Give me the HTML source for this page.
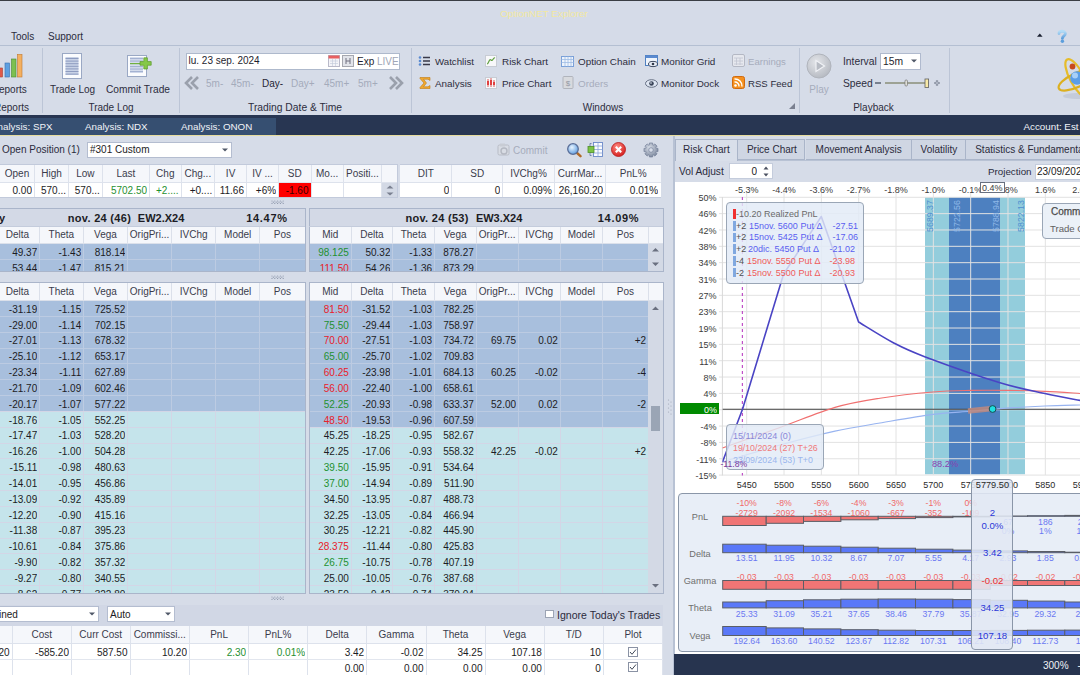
<!DOCTYPE html><html><head><meta charset="utf-8"><style>
html,body{margin:0;padding:0;}
body{width:1080px;height:675px;overflow:hidden;position:relative;background:#d6dce8;font-family:"Liberation Sans",sans-serif;}
body div, body svg{position:absolute;}
body div div{position:absolute;}
</style></head><body>
<div style="left:0.00px;top:0.00px;width:1080.00px;height:46.00px;background:#d5dbe8;"></div>
<div style="left:0.00px;top:0.00px;width:1080.00px;height:1.20px;background:#3a3d44;"></div>
<div style="left:474.00px;width:140.00px;text-align:center;overflow:hidden;top:6.50px;height:14px;line-height:14px;font-size:9.8px;color:#f2e8a0;font-weight:normal;white-space:pre;">OptionNET Explorer</div>
<div style="left:11.00px;top:29.50px;height:14px;line-height:14px;font-size:10px;color:#2b2b3c;font-weight:normal;white-space:pre;">Tools</div>
<div style="left:48.00px;top:29.50px;height:14px;line-height:14px;font-size:10px;color:#2b2b3c;font-weight:normal;white-space:pre;">Support</div>
<svg style="left:1035px;top:31px;width:10px;height:8px" viewBox="0 0 10 8"><path d="M2 5.8 L4.8 2.6 L7.6 5.8Z" fill="#1a2030"/></svg>
<svg style="left:1055px;top:28px;width:14px;height:16px" viewBox="0 0 14 16"><defs><linearGradient id="hq" x1="0" y1="0" x2="0" y2="1"><stop offset="0" stop-color="#b4dcf6"/><stop offset="1" stop-color="#5c9edc"/></linearGradient></defs><path d="M4 5.5 C4 2.6 10.4 2.4 10.4 5.6 C10.4 7.9 7.4 8 7.4 10.4" fill="none" stroke="url(#hq)" stroke-width="2.8" stroke-linecap="round"/><circle cx="7.4" cy="13.2" r="1.7" fill="#5c9edc"/></svg>
<div style="left:0.00px;top:45.00px;width:1080.00px;height:1.00px;background:#b4bfd2;"></div>
<div style="left:0.00px;top:46.00px;width:1080.00px;height:69.00px;background:#d6dce8;"></div>
<div style="left:42.00px;top:48.00px;width:1.00px;height:65.00px;background:#bcc5d6;"></div>
<div style="left:179.00px;top:48.00px;width:1.00px;height:65.00px;background:#bcc5d6;"></div>
<div style="left:411.00px;top:48.00px;width:1.00px;height:65.00px;background:#bcc5d6;"></div>
<div style="left:799.00px;top:48.00px;width:1.00px;height:65.00px;background:#bcc5d6;"></div>
<div style="left:949.00px;top:48.00px;width:1.00px;height:65.00px;background:#bcc5d6;"></div>
<svg style="left:0px;top:53px;width:24px;height:26px" viewBox="0 0 24 26"><rect x="-2" y="15" width="4.5" height="9" fill="#e05a4a" stroke="#a84030" stroke-width="0.6"/><rect x="5" y="10" width="4.5" height="14" fill="#5ea0e0" stroke="#3a70b0" stroke-width="0.6"/><rect x="11.5" y="6" width="4.5" height="18" fill="#7cc050" stroke="#4a8a30" stroke-width="0.6"/><rect x="17.5" y="1.5" width="4.5" height="22.5" fill="#f4b060" stroke="#c07830" stroke-width="0.6"/></svg>
<div style="left:-1.00px;top:82.50px;height:14px;line-height:14px;font-size:10px;color:#2d2d3d;font-weight:normal;white-space:pre;">eports</div>
<div style="left:-6.00px;top:100.80px;height:14px;line-height:14px;font-size:10px;color:#2d2d3d;font-weight:normal;white-space:pre;">Reports</div>
<svg style="left:61px;top:53px;width:22px;height:27px" viewBox="0 0 22 27"><rect x="1.5" y="0.5" width="19" height="25" fill="#fbfcfe" stroke="#9aa8c4"/><rect x="4.5" y="4" width="13" height="18" fill="#c8d2e6"/><rect x="4.5" y="5.0" width="13" height="1" fill="#8e9cc0"/><rect x="4.5" y="7.6" width="13" height="1" fill="#8e9cc0"/><rect x="4.5" y="10.2" width="13" height="1" fill="#8e9cc0"/><rect x="4.5" y="12.8" width="13" height="1" fill="#8e9cc0"/><rect x="4.5" y="15.4" width="13" height="1" fill="#8e9cc0"/><rect x="4.5" y="18.0" width="13" height="1" fill="#8e9cc0"/><rect x="4.5" y="20.6" width="13" height="1" fill="#8e9cc0"/></svg>
<div style="left:32.50px;width:80.00px;text-align:center;overflow:hidden;top:82.50px;height:14px;line-height:14px;font-size:10px;color:#2d2d3d;font-weight:normal;white-space:pre;">Trade Log</div>
<svg style="left:126px;top:53px;width:26px;height:25px" viewBox="0 0 26 25"><rect x="1.5" y="2.5" width="19" height="21" fill="#fbfcfe" stroke="#9aa8c4"/><rect x="4" y="4" width="13" height="16" fill="#d4dcec"/><rect x="4" y="5" width="13" height="1.1" fill="#a4b2d2"/><rect x="4" y="7.5" width="13" height="1.1" fill="#a4b2d2"/><rect x="4" y="13" width="13" height="1.1" fill="#a4b2d2"/><rect x="4" y="15.5" width="13" height="1.1" fill="#a4b2d2"/><rect x="4" y="18" width="13" height="1.1" fill="#a4b2d2"/><rect x="4" y="10" width="11" height="1.2" fill="#70b040"/><path d="M17.8 4.8 h3.6 v3.8 h3.8 v3.6 h-3.8 v3.8 h-3.6 v-3.8 h-3.8 v-3.6 h3.8z" fill="#86c84a" stroke="#5a9a2a" stroke-width="0.7"/></svg>
<div style="left:93.00px;width:90.00px;text-align:center;overflow:hidden;top:82.50px;height:14px;line-height:14px;font-size:10.2px;color:#2d2d3d;font-weight:normal;white-space:pre;">Commit Trade</div>
<div style="left:71.00px;width:80.00px;text-align:center;overflow:hidden;top:100.80px;height:14px;line-height:14px;font-size:10px;color:#2d2d3d;font-weight:normal;white-space:pre;">Trade Log</div>
<div style="left:186.00px;top:52.50px;width:214.00px;height:17.00px;background:#ffffff;border:1px solid #aeb9cc;box-sizing:border-box;"></div>
<div style="left:188.50px;top:54.00px;height:14px;line-height:14px;font-size:10px;color:#1e1e2e;font-weight:normal;white-space:pre;">lu. 23 sep. 2024</div>
<svg style="left:328px;top:55px;width:12px;height:12px" viewBox="0 0 12 12"><rect x="0.5" y="0.5" width="11" height="11" fill="#f4f4f8" stroke="#b9b9c9"/><rect x="0.5" y="0.5" width="11" height="3" fill="#e86060"/><path d="M2 6h8M2 8.5h8M4.5 4v7M7.5 4v7" stroke="#c0c8d8" stroke-width="0.6"/></svg>
<svg style="left:342px;top:55px;width:12px;height:12px" viewBox="0 0 12 12"><rect x="0.5" y="0.5" width="11" height="11" fill="#e2e4ea" stroke="#a6a8b0"/><path d="M4 3v6M8 3v6M4 6h4" stroke="#707080" stroke-width="1"/></svg>
<div style="left:357.00px;top:55.00px;height:14px;line-height:14px;font-size:10px;color:#1e1e2e;font-weight:normal;white-space:pre;">Exp</div>
<div style="left:377.00px;top:55.00px;height:14px;line-height:14px;font-size:10px;color:#a0a6b6;font-weight:normal;white-space:pre;">LIVE</div>
<svg style="left:184px;top:76px;width:16px;height:14px" viewBox="0 0 16 14"><path d="M8 1 L2 7 L8 13 M14 1 L8 7 L14 13" fill="none" stroke="#9aa0ac" stroke-width="2.6"/></svg>
<div style="left:206.00px;top:77.00px;height:14px;line-height:14px;font-size:10px;color:#a4abbb;font-weight:normal;white-space:pre;">5m-</div>
<div style="left:231.00px;top:77.00px;height:14px;line-height:14px;font-size:10px;color:#a4abbb;font-weight:normal;white-space:pre;">45m-</div>
<div style="left:262.00px;top:77.00px;height:14px;line-height:14px;font-size:10px;color:#252535;font-weight:normal;white-space:pre;">Day-</div>
<div style="left:291.00px;top:77.00px;height:14px;line-height:14px;font-size:10px;color:#a4abbb;font-weight:normal;white-space:pre;">Day+</div>
<div style="left:324.00px;top:77.00px;height:14px;line-height:14px;font-size:10px;color:#a4abbb;font-weight:normal;white-space:pre;">45m+</div>
<div style="left:358.00px;top:77.00px;height:14px;line-height:14px;font-size:10px;color:#a4abbb;font-weight:normal;white-space:pre;">5m+</div>
<svg style="left:388px;top:76px;width:16px;height:14px" viewBox="0 0 16 14"><path d="M2 1 L8 7 L2 13 M8 1 L14 7 L8 13" fill="none" stroke="#9aa0ac" stroke-width="2.6"/></svg>
<div style="left:235.00px;width:120.00px;text-align:center;overflow:hidden;top:100.80px;height:14px;line-height:14px;font-size:10.3px;color:#2d2d3d;font-weight:normal;white-space:pre;">Trading Date & Time</div>
<svg style="left:418px;top:55px;width:12px;height:12px" viewBox="0 0 12 12"><circle cx="2" cy="2.5" r="1.3" fill="#5a8ad0"/><circle cx="2" cy="6" r="1.3" fill="#5a8ad0"/><circle cx="2" cy="9.5" r="1.3" fill="#5a8ad0"/><path d="M5 2.5h7M5 6h7M5 9.5h7" stroke="#3a3a4a" stroke-width="1.3"/></svg>
<div style="left:435.00px;top:55.00px;height:14px;line-height:14px;font-size:9.7px;color:#2d2d3d;font-weight:normal;white-space:pre;">Watchlist</div>
<svg style="left:485px;top:55px;width:12px;height:12px" viewBox="0 0 12 12"><rect x="0.5" y="0.5" width="11" height="11" fill="#f8f8fa" stroke="#c8ccd4"/><path d="M2 9 C4 9 4 3 6 5 C8 7 8 2 10 3" fill="none" stroke="#60a040" stroke-width="1.2"/></svg>
<div style="left:502.00px;top:55.00px;height:14px;line-height:14px;font-size:9.9px;color:#2d2d3d;font-weight:normal;white-space:pre;">Risk Chart</div>
<svg style="left:561px;top:55px;width:13px;height:13px" viewBox="0 0 13 13"><rect x="0.5" y="1.5" width="12" height="10" fill="#eef4fc" stroke="#7aa0d8"/><path d="M0.5 4.5h12M0.5 7.5h12M4 1.5v10M7 1.5v10M10 1.5v10" stroke="#a0bce4" stroke-width="0.8"/></svg>
<div style="left:578.00px;top:55.00px;height:14px;line-height:14px;font-size:9.9px;color:#2d2d3d;font-weight:normal;white-space:pre;">Option Chain</div>
<svg style="left:645px;top:55px;width:13px;height:13px" viewBox="0 0 13 13"><rect x="0.5" y="0.5" width="12" height="10" fill="#eef4fc" stroke="#5080c0"/><rect x="0.5" y="0.5" width="12" height="2.5" fill="#5a8ad0"/><ellipse cx="8" cy="9" rx="4.5" ry="2.6" fill="#e8eef8" stroke="#404a60"/><circle cx="8" cy="9" r="1.3" fill="#303848"/></svg>
<div style="left:661.00px;top:55.00px;height:14px;line-height:14px;font-size:9.9px;color:#2d2d3d;font-weight:normal;white-space:pre;">Monitor Grid</div>
<svg style="left:732px;top:54px;width:13px;height:13px" viewBox="0 0 13 13"><rect x="0.5" y="0.5" width="12" height="12" rx="1.5" fill="#e6e8ee" stroke="#b4b8c4"/><path d="M2 4h9M2 7h9M2 10h9M4.5 4v7M8 4v7" stroke="#c0c4d0" stroke-width="0.8"/></svg>
<div style="left:748.00px;top:55.00px;height:14px;line-height:14px;font-size:9.6px;color:#a6acbc;font-weight:normal;white-space:pre;">Earnings</div>
<svg style="left:419px;top:77px;width:12px;height:12px" viewBox="0 0 12 12"><path d="M1 0.5 H11 V3.5 L9 2.2 H4.5 L7.5 6 L4.5 9.8 H9 L11 8.5 V11.5 H1 V10.5 L5 6 L1 1.5Z" fill="#f0a830" stroke="#c07a10" stroke-width="0.6"/></svg>
<div style="left:435.00px;top:77.00px;height:14px;line-height:14px;font-size:9.9px;color:#2d2d3d;font-weight:normal;white-space:pre;">Analysis</div>
<svg style="left:485px;top:77px;width:12px;height:12px" viewBox="0 0 12 12"><rect x="0.5" y="0.5" width="11" height="11" fill="#f8f8fa" stroke="#c8ccd4"/><path d="M3 2v8M6 1v9M9 3v7" stroke="#d03030" stroke-width="0.8"/><rect x="2" y="4" width="2" height="4" fill="#e04040"/><rect x="5" y="3" width="2" height="5" fill="#e04040"/><rect x="8" y="5" width="2" height="3" fill="#e04040"/></svg>
<div style="left:502.00px;top:77.00px;height:14px;line-height:14px;font-size:9.9px;color:#2d2d3d;font-weight:normal;white-space:pre;">Price Chart</div>
<svg style="left:562px;top:76px;width:12px;height:13px" viewBox="0 0 12 13"><rect x="1" y="0.5" width="10" height="12" rx="1" fill="#d8dade" stroke="#b0b4bc"/><text x="6" y="10" font-size="8" text-anchor="middle" fill="#9498a4" font-family="Liberation Sans">$</text></svg>
<div style="left:578.00px;top:77.00px;height:14px;line-height:14px;font-size:9.9px;color:#a6acbc;font-weight:normal;white-space:pre;">Orders</div>
<svg style="left:645px;top:77px;width:13px;height:13px" viewBox="0 0 13 13"><ellipse cx="6.5" cy="6.5" rx="6" ry="3.8" fill="#dfe6f2" stroke="#5a6478" stroke-width="0.9"/><circle cx="6.5" cy="6.5" r="2.3" fill="#3a4458"/><circle cx="6" cy="6" r="0.8" fill="#e8eef8"/></svg>
<div style="left:661.00px;top:77.00px;height:14px;line-height:14px;font-size:9.9px;color:#2d2d3d;font-weight:normal;white-space:pre;">Monitor Dock</div>
<svg style="left:732px;top:76px;width:13px;height:13px" viewBox="0 0 13 13"><rect x="0.5" y="0.5" width="12" height="12" rx="2" fill="#f4901e" stroke="#d06a10"/><circle cx="3.5" cy="9.5" r="1.3" fill="#fff"/><path d="M2.5 6 A4 4 0 0 1 7 10.5 M2.5 3 A7 7 0 0 1 10 10.5" fill="none" stroke="#fff" stroke-width="1.4"/></svg>
<div style="left:748.00px;top:77.00px;height:14px;line-height:14px;font-size:9.6px;color:#2d2d3d;font-weight:normal;white-space:pre;">RSS Feed</div>
<div style="left:573.00px;width:60.00px;text-align:center;overflow:hidden;top:100.80px;height:14px;line-height:14px;font-size:10px;color:#2d2d3d;font-weight:normal;white-space:pre;">Windows</div>
<svg style="left:789px;top:103px;width:6px;height:6px" viewBox="0 0 6 6"><path d="M6 0 V6 H0Z" fill="#7a8090"/></svg>
<svg style="left:806px;top:53px;width:26px;height:26px" viewBox="0 0 26 26"><defs><radialGradient id="pg" cx="0.4" cy="0.35" r="0.7"><stop offset="0" stop-color="#e4e6ea"/><stop offset="1" stop-color="#b4b8c0"/></radialGradient></defs><circle cx="13" cy="13" r="12" fill="url(#pg)" stroke="#b0b4bc"/><path d="M10 7.5 L18.5 13 L10 18.5Z" fill="#b8bcc4" stroke="#f0f2f6" stroke-width="1.2"/></svg>
<div style="left:799.00px;width:40.00px;text-align:center;overflow:hidden;top:82.50px;height:14px;line-height:14px;font-size:10px;color:#a6acbc;font-weight:normal;white-space:pre;">Play</div>
<div style="left:843.00px;top:55.00px;height:14px;line-height:14px;font-size:10.3px;color:#2d2d3d;font-weight:normal;white-space:pre;">Interval</div>
<div style="left:879.50px;top:53.00px;width:41.50px;height:16.50px;background:#ffffff;border:1px solid #b0bace;box-sizing:border-box;"></div>
<div style="left:883.00px;top:55.00px;height:14px;line-height:14px;font-size:10.3px;color:#1e1e2e;font-weight:normal;white-space:pre;">15m</div>
<svg style="left:911px;top:59px;width:6px;height:4px" viewBox="0 0 6 4"><path d="M0 0.5h6L3 3.5Z" fill="#505868"/></svg>
<div style="left:843.00px;top:77.00px;height:14px;line-height:14px;font-size:10.3px;color:#2d2d3d;font-weight:normal;white-space:pre;">Speed</div>
<svg style="left:874px;top:77px;width:68px;height:12px" viewBox="0 0 68 12"><path d="M1 6h6" stroke="#505868" stroke-width="1.4"/><path d="M11 6h44" stroke="#8a8f78" stroke-width="1.6"/><rect x="31" y="3" width="2.4" height="6" rx="1" fill="#e8e8e0" stroke="#707070" stroke-width="0.7"/><rect x="51" y="2" width="3.6" height="8.5" fill="#f8eaa8" stroke="#606060" stroke-width="0.8"/><path d="M60.5 6h5M63 3.5v5" stroke="#687080" stroke-width="2.2"/><path d="M61 6h4M63 4v4" stroke="#d6dce8" stroke-width="0.8"/></svg>
<div style="left:843.50px;width:60.00px;text-align:center;overflow:hidden;top:100.80px;height:14px;line-height:14px;font-size:10px;color:#2d2d3d;font-weight:normal;white-space:pre;">Playback</div>
<svg style="left:1054px;top:54px;width:26px;height:48px" viewBox="0 0 26 48"><ellipse cx="23" cy="42" rx="14" ry="3" fill="#b8c0d0" opacity="0.6"/><ellipse cx="23" cy="24" rx="7" ry="21" fill="none" stroke="#e6bc2a" stroke-width="2.2" transform="rotate(-28 23 24)"/><ellipse cx="23" cy="26" rx="20" ry="7" fill="none" stroke="#dcb020" stroke-width="2.2" transform="rotate(-25 23 26)"/><circle cx="23" cy="24" r="6.8" fill="#5b9ee6"/><circle cx="21" cy="21.5" r="3" fill="#a8d0f8"/><circle cx="18.5" cy="12.5" r="2.9" fill="#c84a1c"/></svg>
<div style="left:0.00px;top:115.00px;width:1080.00px;height:20.00px;background:#283652;"></div>
<div style="left:0.00px;top:117.60px;width:276.00px;height:17.40px;background:#364f71;"></div>
<div style="left:-9.00px;top:119.70px;height:14px;line-height:14px;font-size:9.8px;color:#f2f4f8;font-weight:normal;white-space:pre;">Analysis: SPX</div>
<div style="left:85.00px;top:119.70px;height:14px;line-height:14px;font-size:9.8px;color:#f2f4f8;font-weight:normal;white-space:pre;">Analysis: NDX</div>
<div style="left:181.00px;top:119.70px;height:14px;line-height:14px;font-size:9.8px;color:#f2f4f8;font-weight:normal;white-space:pre;">Analysis: ONON</div>
<div style="left:1023.50px;top:119.70px;height:14px;line-height:14px;font-size:9.8px;color:#f2f4f8;font-weight:normal;white-space:pre;">Account: Est</div>
<div style="left:0.00px;top:135.00px;width:1080.00px;height:2.00px;background:#e6dc9e;"></div>
<div style="left:0.00px;top:136.00px;width:663.00px;height:539.00px;background:#d6dce8;"></div>
<div style="left:663.00px;top:136.00px;width:11.00px;height:539.00px;background:#d6dce8;"></div>
<div style="left:673.30px;top:136.00px;width:1.20px;height:539.00px;background:#b8c2d4;"></div>
<svg style="left:667px;top:399px;width:6px;height:16px" viewBox="0 0 6 16"><circle cx="1.5" cy="1" r="0.6" fill="#a0a8b8"/><circle cx="4.0" cy="3" r="0.6" fill="#a0a8b8"/><circle cx="1.5" cy="5" r="0.6" fill="#a0a8b8"/><circle cx="4.0" cy="7" r="0.6" fill="#a0a8b8"/><circle cx="1.5" cy="9" r="0.6" fill="#a0a8b8"/><circle cx="4.0" cy="11" r="0.6" fill="#a0a8b8"/><circle cx="1.5" cy="13" r="0.6" fill="#a0a8b8"/><circle cx="4.0" cy="15" r="0.6" fill="#a0a8b8"/></svg>
<div style="left:2.00px;top:143.00px;height:14px;line-height:14px;font-size:10px;color:#2b2b3c;font-weight:normal;white-space:pre;">Open Position (1)</div>
<div style="left:87.00px;top:142.00px;width:145.00px;height:15.50px;background:#ffffff;border:1px solid #b4bdd0;box-sizing:border-box;"></div>
<div style="left:90.00px;top:143.00px;height:14px;line-height:14px;font-size:10px;color:#1c1c24;font-weight:normal;white-space:pre;">#301 Custom</div>
<svg style="left:222px;top:148px;width:6px;height:4px" viewBox="0 0 6 4"><path d="M0 0.5h6L3 3.5Z" fill="#505868"/></svg>
<svg style="left:497px;top:143px;width:14px;height:14px" viewBox="0 0 14 14"><rect x="1" y="2" width="11" height="10" rx="1.5" fill="#d8dce4" stroke="#b8bcc6"/><circle cx="7" cy="8" r="3" fill="none" stroke="#b4b8c2" stroke-width="1.4"/><rect x="3" y="0.5" width="5" height="3" fill="#c8ccd4"/></svg>
<div style="left:513.00px;top:144.00px;height:14px;line-height:14px;font-size:10px;color:#a6acbc;font-weight:normal;white-space:pre;">Commit</div>
<svg style="left:565px;top:141px;width:17px;height:17px" viewBox="0 0 17 17"><defs><radialGradient id="mg" cx="0.4" cy="0.35" r="0.7"><stop offset="0" stop-color="#e8f4ff"/><stop offset="1" stop-color="#5a9ae0"/></radialGradient></defs><path d="M11.5 11.5 L15.5 15.2" stroke="#b06a28" stroke-width="2.4" stroke-linecap="round"/><circle cx="8" cy="8" r="5.3" fill="url(#mg)" stroke="#5a6e98" stroke-width="1.3"/></svg>
<svg style="left:587px;top:141px;width:17px;height:17px" viewBox="0 0 17 17"><path d="M4.5 2.5 H3 V14.5 H4.5" fill="none" stroke="#6a7ea8" stroke-width="0.9"/><rect x="6.5" y="1.5" width="9" height="14" fill="#fafcff" stroke="#6a88c8" stroke-width="0.9"/><path d="M6.5 5h9M6.5 8.5h9M6.5 12h9M11 1.5v14" stroke="#8aa4d8" stroke-width="0.8"/><rect x="1" y="5.5" width="6" height="6" fill="#7cc444" stroke="#4e8e2a" stroke-width="0.8"/></svg>
<svg style="left:610px;top:141px;width:17px;height:17px" viewBox="0 0 17 17"><defs><radialGradient id="rg" cx="0.4" cy="0.3" r="0.75"><stop offset="0" stop-color="#ff8a80"/><stop offset="1" stop-color="#d21a1a"/></radialGradient></defs><circle cx="8.5" cy="8.5" r="7" fill="url(#rg)" stroke="#b81818" stroke-width="0.8"/><path d="M5.8 5.8 L11.2 11.2 M11.2 5.8 L5.8 11.2" stroke="#fff" stroke-width="2.1"/></svg>
<svg style="left:643px;top:141.5px;width:16px;height:16px" viewBox="0 0 16 16"><defs><radialGradient id="gg" cx="0.4" cy="0.35" r="0.7"><stop offset="0" stop-color="#d8dee8"/><stop offset="1" stop-color="#7a869c"/></radialGradient></defs><g fill="url(#gg)" stroke="#6a7690" stroke-width="0.6"><path d="M15.03 6.43 L15.03 9.57 L12.87 9.83 L12.73 10.17 L14.08 11.86 L11.86 14.08 L10.15 12.74 L9.81 12.88 L9.57 15.03 L6.43 15.03 L6.17 12.87 L5.83 12.73 L4.14 14.08 L1.92 11.86 L3.26 10.15 L3.12 9.81 L0.97 9.57 L0.97 6.43 L3.13 6.17 L3.27 5.83 L1.92 4.14 L4.14 1.92 L5.85 3.26 L6.19 3.12 L6.43 0.97 L9.57 0.97 L9.83 3.13 L10.17 3.27 L11.86 1.92 L14.08 4.14 L12.74 5.85 L12.88 6.19Z"/></g><circle cx="8" cy="8" r="2.3" fill="#d6dce8" stroke="#6a7690" stroke-width="0.6"/></svg>
<div style="left:-10.00px;top:164.50px;width:407.00px;height:18.00px;background:#f5f7fb;"></div>
<div style="left:-10.00px;top:182.50px;width:407.00px;height:14.70px;background:#ffffff;"></div>
<div style="left:-0.25px;width:34.50px;text-align:center;overflow:hidden;top:166.50px;height:14px;line-height:14px;font-size:10px;color:#3a3c4c;font-weight:normal;white-space:pre;">Open</div>
<div style="left:34.50px;width:34.00px;text-align:center;overflow:hidden;top:166.50px;height:14px;line-height:14px;font-size:10px;color:#3a3c4c;font-weight:normal;white-space:pre;">High</div>
<div style="left:68.50px;width:33.80px;text-align:center;overflow:hidden;top:166.50px;height:14px;line-height:14px;font-size:10px;color:#3a3c4c;font-weight:normal;white-space:pre;">Low</div>
<div style="left:102.30px;width:47.30px;text-align:center;overflow:hidden;top:166.50px;height:14px;line-height:14px;font-size:10px;color:#3a3c4c;font-weight:normal;white-space:pre;">Last</div>
<div style="left:149.60px;width:31.40px;text-align:center;overflow:hidden;top:166.50px;height:14px;line-height:14px;font-size:10px;color:#3a3c4c;font-weight:normal;white-space:pre;">Chg</div>
<div style="left:181.00px;width:33.70px;text-align:center;overflow:hidden;top:166.50px;height:14px;line-height:14px;font-size:10px;color:#3a3c4c;font-weight:normal;white-space:pre;">Chg...</div>
<div style="left:214.70px;width:31.80px;text-align:center;overflow:hidden;top:166.50px;height:14px;line-height:14px;font-size:10px;color:#3a3c4c;font-weight:normal;white-space:pre;">IV</div>
<div style="left:246.50px;width:32.10px;text-align:center;overflow:hidden;top:166.50px;height:14px;line-height:14px;font-size:10px;color:#3a3c4c;font-weight:normal;white-space:pre;">IV ...</div>
<div style="left:278.60px;width:32.40px;text-align:center;overflow:hidden;top:166.50px;height:14px;line-height:14px;font-size:10px;color:#3a3c4c;font-weight:normal;white-space:pre;">SD</div>
<div style="left:311.00px;width:32.30px;text-align:center;overflow:hidden;top:166.50px;height:14px;line-height:14px;font-size:10px;color:#3a3c4c;font-weight:normal;white-space:pre;">Mo...</div>
<div style="left:343.30px;width:38.40px;text-align:center;overflow:hidden;top:166.50px;height:14px;line-height:14px;font-size:10px;color:#3a3c4c;font-weight:normal;white-space:pre;">Positi...</div>
<div style="left:34.00px;top:164.50px;width:1.00px;height:32.70px;background:#dde2ec;"></div>
<div style="left:68.00px;top:164.50px;width:1.00px;height:32.70px;background:#dde2ec;"></div>
<div style="left:101.80px;top:164.50px;width:1.00px;height:32.70px;background:#dde2ec;"></div>
<div style="left:149.10px;top:164.50px;width:1.00px;height:32.70px;background:#dde2ec;"></div>
<div style="left:180.50px;top:164.50px;width:1.00px;height:32.70px;background:#dde2ec;"></div>
<div style="left:214.20px;top:164.50px;width:1.00px;height:32.70px;background:#dde2ec;"></div>
<div style="left:246.00px;top:164.50px;width:1.00px;height:32.70px;background:#dde2ec;"></div>
<div style="left:278.10px;top:164.50px;width:1.00px;height:32.70px;background:#dde2ec;"></div>
<div style="left:310.50px;top:164.50px;width:1.00px;height:32.70px;background:#dde2ec;"></div>
<div style="left:342.80px;top:164.50px;width:1.00px;height:32.70px;background:#dde2ec;"></div>
<div style="left:381.20px;top:164.50px;width:1.00px;height:32.70px;background:#dde2ec;"></div>
<div style="left:-10.00px;top:182.00px;width:407.00px;height:1.00px;background:#dde2ec;"></div>
<div style="left:278.60px;top:182.50px;width:32.40px;height:14.70px;background:#ff0000;"></div>
<div style="left:-18.00px;width:50.00px;text-align:right;overflow:hidden;top:184.35px;height:14px;line-height:14px;font-size:10px;color:#1c1c24;font-weight:normal;white-space:pre;">0.00</div>
<div style="left:16.00px;width:50.00px;text-align:right;overflow:hidden;top:184.35px;height:14px;line-height:14px;font-size:10px;color:#1c1c24;font-weight:normal;white-space:pre;">570...</div>
<div style="left:49.80px;width:50.00px;text-align:right;overflow:hidden;top:184.35px;height:14px;line-height:14px;font-size:10px;color:#1c1c24;font-weight:normal;white-space:pre;">570...</div>
<div style="left:97.10px;width:50.00px;text-align:right;overflow:hidden;top:184.35px;height:14px;line-height:14px;font-size:10px;color:#1f9030;font-weight:normal;white-space:pre;">5702.50</div>
<div style="left:128.50px;width:50.00px;text-align:right;overflow:hidden;top:184.35px;height:14px;line-height:14px;font-size:10px;color:#1f9030;font-weight:normal;white-space:pre;">+2....</div>
<div style="left:162.20px;width:50.00px;text-align:right;overflow:hidden;top:184.35px;height:14px;line-height:14px;font-size:10px;color:#1c1c24;font-weight:normal;white-space:pre;">+0....</div>
<div style="left:194.00px;width:50.00px;text-align:right;overflow:hidden;top:184.35px;height:14px;line-height:14px;font-size:10px;color:#1c1c24;font-weight:normal;white-space:pre;">11.66</div>
<div style="left:226.10px;width:50.00px;text-align:right;overflow:hidden;top:184.35px;height:14px;line-height:14px;font-size:10px;color:#1c1c24;font-weight:normal;white-space:pre;">+6%</div>
<div style="left:258.50px;width:50.00px;text-align:right;overflow:hidden;top:184.35px;height:14px;line-height:14px;font-size:10px;color:#3a0000;font-weight:normal;white-space:pre;">-1.60</div>
<div style="left:381.70px;top:182.50px;width:15.30px;height:14.70px;background:#d3d9e5;"></div>
<svg style="left:383.5px;top:182.5px;width:12px;height:15px" viewBox="0 0 12 15"><path d="M2.5 5.5 L6 2.5 L9.5 5.5Z M2.5 9.5 L6 12.5 L9.5 9.5Z" fill="#7a8090"/></svg>
<div style="left:-10.00px;top:164.00px;width:407.50px;height:33.50px;background:transparent;border:1px solid #c2cadb;box-sizing:border-box;"></div>
<div style="left:400.00px;top:164.00px;width:261.00px;height:33.50px;background:transparent;border:1px solid #c2cadb;box-sizing:border-box;"></div>
<div style="left:400.00px;top:164.50px;width:260.70px;height:18.00px;background:#f5f7fb;"></div>
<div style="left:400.00px;top:182.50px;width:260.70px;height:14.70px;background:#ffffff;"></div>
<div style="left:400.00px;width:51.70px;text-align:center;overflow:hidden;top:166.50px;height:14px;line-height:14px;font-size:10px;color:#3a3c4c;font-weight:normal;white-space:pre;">DIT</div>
<div style="left:451.70px;width:51.00px;text-align:center;overflow:hidden;top:166.50px;height:14px;line-height:14px;font-size:10px;color:#3a3c4c;font-weight:normal;white-space:pre;">SD</div>
<div style="left:502.70px;width:51.60px;text-align:center;overflow:hidden;top:166.50px;height:14px;line-height:14px;font-size:10px;color:#3a3c4c;font-weight:normal;white-space:pre;">IVChg%</div>
<div style="left:554.30px;width:51.40px;text-align:center;overflow:hidden;top:166.50px;height:14px;line-height:14px;font-size:10px;color:#3a3c4c;font-weight:normal;white-space:pre;">CurrMar...</div>
<div style="left:605.70px;width:55.00px;text-align:center;overflow:hidden;top:166.50px;height:14px;line-height:14px;font-size:10px;color:#3a3c4c;font-weight:normal;white-space:pre;">PnL%</div>
<div style="left:451.20px;top:164.50px;width:1.00px;height:32.70px;background:#dde2ec;"></div>
<div style="left:502.20px;top:164.50px;width:1.00px;height:32.70px;background:#dde2ec;"></div>
<div style="left:553.80px;top:164.50px;width:1.00px;height:32.70px;background:#dde2ec;"></div>
<div style="left:605.20px;top:164.50px;width:1.00px;height:32.70px;background:#dde2ec;"></div>
<div style="left:400.00px;top:182.00px;width:260.70px;height:1.00px;background:#dde2ec;"></div>
<div style="left:389.20px;width:60.00px;text-align:right;overflow:hidden;top:184.35px;height:14px;line-height:14px;font-size:10px;color:#1c1c24;font-weight:normal;white-space:pre;">0</div>
<div style="left:440.20px;width:60.00px;text-align:right;overflow:hidden;top:184.35px;height:14px;line-height:14px;font-size:10px;color:#1c1c24;font-weight:normal;white-space:pre;">0</div>
<div style="left:491.80px;width:60.00px;text-align:right;overflow:hidden;top:184.35px;height:14px;line-height:14px;font-size:10px;color:#1c1c24;font-weight:normal;white-space:pre;">0.09%</div>
<div style="left:543.20px;width:60.00px;text-align:right;overflow:hidden;top:184.35px;height:14px;line-height:14px;font-size:10px;color:#1c1c24;font-weight:normal;white-space:pre;">26,160.20</div>
<div style="left:598.20px;width:60.00px;text-align:right;overflow:hidden;top:184.35px;height:14px;line-height:14px;font-size:10px;color:#1c1c24;font-weight:normal;white-space:pre;">0.01%</div>
<svg style="left:271.4px;top:200.2px;width:14px;height:5px" viewBox="0 0 14 5"><circle cx="1.0" cy="1.0" r="0.6" fill="#8e98ac"/><circle cx="3.8" cy="1.0" r="0.6" fill="#8e98ac"/><circle cx="6.6" cy="1.0" r="0.6" fill="#8e98ac"/><circle cx="9.4" cy="1.0" r="0.6" fill="#8e98ac"/><circle cx="12.2" cy="1.0" r="0.6" fill="#8e98ac"/><circle cx="2.4" cy="2.2" r="0.6" fill="#8e98ac"/><circle cx="5.2" cy="2.2" r="0.6" fill="#8e98ac"/><circle cx="8.0" cy="2.2" r="0.6" fill="#8e98ac"/><circle cx="10.8" cy="2.2" r="0.6" fill="#8e98ac"/><circle cx="1.0" cy="3.4" r="0.6" fill="#8e98ac"/><circle cx="3.8" cy="3.4" r="0.6" fill="#8e98ac"/><circle cx="6.6" cy="3.4" r="0.6" fill="#8e98ac"/><circle cx="9.4" cy="3.4" r="0.6" fill="#8e98ac"/><circle cx="12.2" cy="3.4" r="0.6" fill="#8e98ac"/></svg>
<svg style="left:271.4px;top:275.2px;width:14px;height:5px" viewBox="0 0 14 5"><circle cx="1.0" cy="1.0" r="0.6" fill="#8e98ac"/><circle cx="3.8" cy="1.0" r="0.6" fill="#8e98ac"/><circle cx="6.6" cy="1.0" r="0.6" fill="#8e98ac"/><circle cx="9.4" cy="1.0" r="0.6" fill="#8e98ac"/><circle cx="12.2" cy="1.0" r="0.6" fill="#8e98ac"/><circle cx="2.4" cy="2.2" r="0.6" fill="#8e98ac"/><circle cx="5.2" cy="2.2" r="0.6" fill="#8e98ac"/><circle cx="8.0" cy="2.2" r="0.6" fill="#8e98ac"/><circle cx="10.8" cy="2.2" r="0.6" fill="#8e98ac"/><circle cx="1.0" cy="3.4" r="0.6" fill="#8e98ac"/><circle cx="3.8" cy="3.4" r="0.6" fill="#8e98ac"/><circle cx="6.6" cy="3.4" r="0.6" fill="#8e98ac"/><circle cx="9.4" cy="3.4" r="0.6" fill="#8e98ac"/><circle cx="12.2" cy="3.4" r="0.6" fill="#8e98ac"/></svg>
<svg style="left:271.4px;top:596.3px;width:14px;height:5px" viewBox="0 0 14 5"><circle cx="1.0" cy="1.0" r="0.6" fill="#8e98ac"/><circle cx="3.8" cy="1.0" r="0.6" fill="#8e98ac"/><circle cx="6.6" cy="1.0" r="0.6" fill="#8e98ac"/><circle cx="9.4" cy="1.0" r="0.6" fill="#8e98ac"/><circle cx="12.2" cy="1.0" r="0.6" fill="#8e98ac"/><circle cx="2.4" cy="2.2" r="0.6" fill="#8e98ac"/><circle cx="5.2" cy="2.2" r="0.6" fill="#8e98ac"/><circle cx="8.0" cy="2.2" r="0.6" fill="#8e98ac"/><circle cx="10.8" cy="2.2" r="0.6" fill="#8e98ac"/><circle cx="1.0" cy="3.4" r="0.6" fill="#8e98ac"/><circle cx="3.8" cy="3.4" r="0.6" fill="#8e98ac"/><circle cx="6.6" cy="3.4" r="0.6" fill="#8e98ac"/><circle cx="9.4" cy="3.4" r="0.6" fill="#8e98ac"/><circle cx="12.2" cy="3.4" r="0.6" fill="#8e98ac"/></svg>
<div style="left:-2.00px;top:207.50px;width:308.00px;height:64.50px;background:#c8d0de;border:1px solid #aab5ca;box-sizing:border-box;"></div>
<div style="left:-1.00px;top:208.50px;width:306.00px;height:17.50px;background:#d3d9e6;"></div>
<div style="left:-1.00px;top:210.70px;height:14px;line-height:14px;font-size:11px;color:#1c1c24;font-weight:bold;white-space:pre;">y</div>
<div style="left:67.80px;top:210.70px;height:14px;line-height:14px;font-size:11px;color:#1c1c24;font-weight:bold;white-space:pre;letter-spacing:0.3px">nov. 24 (46)</div>
<div style="left:137.80px;top:210.70px;height:14px;line-height:14px;font-size:11px;color:#1c1c24;font-weight:bold;white-space:pre;">EW2.X24</div>
<div style="left:246.20px;top:210.70px;height:14px;line-height:14px;font-size:11px;color:#1c1c24;font-weight:bold;white-space:pre;letter-spacing:0.7px">14.47%</div>
<div style="left:-4.70px;top:226.00px;width:309.70px;height:17.50px;background:#f5f7fb;"></div>
<div style="left:-3.70px;width:42.10px;text-align:center;overflow:hidden;top:227.75px;height:14px;line-height:14px;font-size:10px;color:#3a3c4c;font-weight:normal;white-space:pre;">Delta</div>
<div style="left:40.40px;width:42.00px;text-align:center;overflow:hidden;top:227.75px;height:14px;line-height:14px;font-size:10px;color:#3a3c4c;font-weight:normal;white-space:pre;">Theta</div>
<div style="left:84.40px;width:42.10px;text-align:center;overflow:hidden;top:227.75px;height:14px;line-height:14px;font-size:10px;color:#3a3c4c;font-weight:normal;white-space:pre;">Vega</div>
<div style="left:128.50px;width:42.10px;text-align:center;overflow:hidden;top:227.75px;height:14px;line-height:14px;font-size:10px;color:#3a3c4c;font-weight:normal;white-space:pre;">OrigPri...</div>
<div style="left:172.60px;width:42.10px;text-align:center;overflow:hidden;top:227.75px;height:14px;line-height:14px;font-size:10px;color:#3a3c4c;font-weight:normal;white-space:pre;">IVChg</div>
<div style="left:216.70px;width:42.10px;text-align:center;overflow:hidden;top:227.75px;height:14px;line-height:14px;font-size:10px;color:#3a3c4c;font-weight:normal;white-space:pre;">Model</div>
<div style="left:260.80px;width:43.20px;text-align:center;overflow:hidden;top:227.75px;height:14px;line-height:14px;font-size:10px;color:#3a3c4c;font-weight:normal;white-space:pre;">Pos</div>
<div style="left:-4.70px;top:242.50px;width:309.70px;height:1.00px;background:#dbe0ea;"></div>
<div style="left:38.90px;top:226.00px;width:1.00px;height:17.50px;background:#dbe0ea;"></div>
<div style="left:82.90px;top:226.00px;width:1.00px;height:17.50px;background:#dbe0ea;"></div>
<div style="left:127.00px;top:226.00px;width:1.00px;height:17.50px;background:#dbe0ea;"></div>
<div style="left:171.10px;top:226.00px;width:1.00px;height:17.50px;background:#dbe0ea;"></div>
<div style="left:215.20px;top:226.00px;width:1.00px;height:17.50px;background:#dbe0ea;"></div>
<div style="left:259.30px;top:226.00px;width:1.00px;height:17.50px;background:#dbe0ea;"></div>
<div style="left:-4.70px;top:243.50px;width:309.70px;height:15.83px;background:#a8bfdd;"></div>
<div style="left:-4.70px;top:259.33px;width:309.70px;height:12.67px;background:#a8bfdd;"></div>
<div style="left:-4.70px;top:258.93px;width:309.70px;height:1.00px;background:#bccbe2;"></div>
<div style="left:38.90px;top:243.50px;width:1.00px;height:15.83px;background:#bccbe2;"></div>
<div style="left:82.90px;top:243.50px;width:1.00px;height:15.83px;background:#bccbe2;"></div>
<div style="left:127.00px;top:243.50px;width:1.00px;height:15.83px;background:#bccbe2;"></div>
<div style="left:171.10px;top:243.50px;width:1.00px;height:15.83px;background:#bccbe2;"></div>
<div style="left:215.20px;top:243.50px;width:1.00px;height:15.83px;background:#bccbe2;"></div>
<div style="left:259.30px;top:243.50px;width:1.00px;height:15.83px;background:#bccbe2;"></div>
<div style="left:38.90px;top:259.33px;width:1.00px;height:12.67px;background:#bccbe2;"></div>
<div style="left:82.90px;top:259.33px;width:1.00px;height:12.67px;background:#bccbe2;"></div>
<div style="left:127.00px;top:259.33px;width:1.00px;height:12.67px;background:#bccbe2;"></div>
<div style="left:171.10px;top:259.33px;width:1.00px;height:12.67px;background:#bccbe2;"></div>
<div style="left:215.20px;top:259.33px;width:1.00px;height:12.67px;background:#bccbe2;"></div>
<div style="left:259.30px;top:259.33px;width:1.00px;height:12.67px;background:#bccbe2;"></div>
<div style="left:-4.70px;top:243.50px;width:309.70px;height:28.50px;overflow:hidden">
<div style="left:-2.20px;width:44.10px;text-align:right;overflow:hidden;top:2.21px;height:14px;line-height:14px;font-size:10px;color:#1c1c24;font-weight:normal;white-space:pre;">49.37</div>
<div style="left:41.90px;width:44.00px;text-align:right;overflow:hidden;top:2.21px;height:14px;line-height:14px;font-size:10px;color:#1c1c24;font-weight:normal;white-space:pre;">-1.43</div>
<div style="left:85.90px;width:44.10px;text-align:right;overflow:hidden;top:2.21px;height:14px;line-height:14px;font-size:10px;color:#1c1c24;font-weight:normal;white-space:pre;">818.14</div>
<div style="left:-2.20px;width:44.10px;text-align:right;overflow:hidden;top:18.05px;height:14px;line-height:14px;font-size:10px;color:#1c1c24;font-weight:normal;white-space:pre;">53.44</div>
<div style="left:41.90px;width:44.00px;text-align:right;overflow:hidden;top:18.05px;height:14px;line-height:14px;font-size:10px;color:#1c1c24;font-weight:normal;white-space:pre;">-1.47</div>
<div style="left:85.90px;width:44.10px;text-align:right;overflow:hidden;top:18.05px;height:14px;line-height:14px;font-size:10px;color:#1c1c24;font-weight:normal;white-space:pre;">815.21</div>
</div>
<div style="left:308.50px;top:207.50px;width:355.00px;height:64.50px;background:#c8d0de;border:1px solid #aab5ca;box-sizing:border-box;"></div>
<div style="left:309.50px;top:208.50px;width:353.00px;height:17.50px;background:#d3d9e6;"></div>
<div style="left:405.40px;top:210.70px;height:14px;line-height:14px;font-size:11px;color:#1c1c24;font-weight:bold;white-space:pre;letter-spacing:0.3px">nov. 24 (53)</div>
<div style="left:475.90px;top:210.70px;height:14px;line-height:14px;font-size:11px;color:#1c1c24;font-weight:bold;white-space:pre;">EW3.X24</div>
<div style="left:597.80px;top:210.70px;height:14px;line-height:14px;font-size:11px;color:#1c1c24;font-weight:bold;white-space:pre;letter-spacing:0.7px">14.09%</div>
<div style="left:309.50px;top:226.00px;width:353.00px;height:17.50px;background:#f5f7fb;"></div>
<div style="left:310.50px;width:39.50px;text-align:center;overflow:hidden;top:227.75px;height:14px;line-height:14px;font-size:10px;color:#3a3c4c;font-weight:normal;white-space:pre;">Mid</div>
<div style="left:352.00px;width:39.70px;text-align:center;overflow:hidden;top:227.75px;height:14px;line-height:14px;font-size:10px;color:#3a3c4c;font-weight:normal;white-space:pre;">Delta</div>
<div style="left:393.70px;width:39.60px;text-align:center;overflow:hidden;top:227.75px;height:14px;line-height:14px;font-size:10px;color:#3a3c4c;font-weight:normal;white-space:pre;">Theta</div>
<div style="left:435.30px;width:39.70px;text-align:center;overflow:hidden;top:227.75px;height:14px;line-height:14px;font-size:10px;color:#3a3c4c;font-weight:normal;white-space:pre;">Vega</div>
<div style="left:477.00px;width:40.30px;text-align:center;overflow:hidden;top:227.75px;height:14px;line-height:14px;font-size:10px;color:#3a3c4c;font-weight:normal;white-space:pre;">OrigPr...</div>
<div style="left:519.30px;width:39.70px;text-align:center;overflow:hidden;top:227.75px;height:14px;line-height:14px;font-size:10px;color:#3a3c4c;font-weight:normal;white-space:pre;">IVChg</div>
<div style="left:561.00px;width:40.70px;text-align:center;overflow:hidden;top:227.75px;height:14px;line-height:14px;font-size:10px;color:#3a3c4c;font-weight:normal;white-space:pre;">Model</div>
<div style="left:603.70px;width:43.60px;text-align:center;overflow:hidden;top:227.75px;height:14px;line-height:14px;font-size:10px;color:#3a3c4c;font-weight:normal;white-space:pre;">Pos</div>
<div style="left:309.50px;top:242.50px;width:353.00px;height:1.00px;background:#dbe0ea;"></div>
<div style="left:350.50px;top:226.00px;width:1.00px;height:17.50px;background:#dbe0ea;"></div>
<div style="left:392.20px;top:226.00px;width:1.00px;height:17.50px;background:#dbe0ea;"></div>
<div style="left:433.80px;top:226.00px;width:1.00px;height:17.50px;background:#dbe0ea;"></div>
<div style="left:475.50px;top:226.00px;width:1.00px;height:17.50px;background:#dbe0ea;"></div>
<div style="left:517.80px;top:226.00px;width:1.00px;height:17.50px;background:#dbe0ea;"></div>
<div style="left:559.50px;top:226.00px;width:1.00px;height:17.50px;background:#dbe0ea;"></div>
<div style="left:602.20px;top:226.00px;width:1.00px;height:17.50px;background:#dbe0ea;"></div>
<div style="left:647.80px;top:226.00px;width:1.00px;height:17.50px;background:#dbe0ea;"></div>
<div style="left:309.50px;top:243.50px;width:353.00px;height:15.83px;background:#a8bfdd;"></div>
<div style="left:309.50px;top:259.33px;width:353.00px;height:12.67px;background:#a8bfdd;"></div>
<div style="left:309.50px;top:258.93px;width:353.00px;height:1.00px;background:#bccbe2;"></div>
<div style="left:350.50px;top:243.50px;width:1.00px;height:15.83px;background:#bccbe2;"></div>
<div style="left:392.20px;top:243.50px;width:1.00px;height:15.83px;background:#bccbe2;"></div>
<div style="left:433.80px;top:243.50px;width:1.00px;height:15.83px;background:#bccbe2;"></div>
<div style="left:475.50px;top:243.50px;width:1.00px;height:15.83px;background:#bccbe2;"></div>
<div style="left:517.80px;top:243.50px;width:1.00px;height:15.83px;background:#bccbe2;"></div>
<div style="left:559.50px;top:243.50px;width:1.00px;height:15.83px;background:#bccbe2;"></div>
<div style="left:602.20px;top:243.50px;width:1.00px;height:15.83px;background:#bccbe2;"></div>
<div style="left:647.80px;top:243.50px;width:1.00px;height:15.83px;background:#bccbe2;"></div>
<div style="left:350.50px;top:259.33px;width:1.00px;height:12.67px;background:#bccbe2;"></div>
<div style="left:392.20px;top:259.33px;width:1.00px;height:12.67px;background:#bccbe2;"></div>
<div style="left:433.80px;top:259.33px;width:1.00px;height:12.67px;background:#bccbe2;"></div>
<div style="left:475.50px;top:259.33px;width:1.00px;height:12.67px;background:#bccbe2;"></div>
<div style="left:517.80px;top:259.33px;width:1.00px;height:12.67px;background:#bccbe2;"></div>
<div style="left:559.50px;top:259.33px;width:1.00px;height:12.67px;background:#bccbe2;"></div>
<div style="left:602.20px;top:259.33px;width:1.00px;height:12.67px;background:#bccbe2;"></div>
<div style="left:647.80px;top:259.33px;width:1.00px;height:12.67px;background:#bccbe2;"></div>
<div style="left:309.50px;top:243.50px;width:353.00px;height:28.50px;overflow:hidden">
<div style="left:-2.20px;width:41.50px;text-align:right;overflow:hidden;top:2.21px;height:14px;line-height:14px;font-size:10px;color:#1f9030;font-weight:normal;white-space:pre;">98.125</div>
<div style="left:39.30px;width:41.70px;text-align:right;overflow:hidden;top:2.21px;height:14px;line-height:14px;font-size:10px;color:#1c1c24;font-weight:normal;white-space:pre;">50.32</div>
<div style="left:81.00px;width:41.60px;text-align:right;overflow:hidden;top:2.21px;height:14px;line-height:14px;font-size:10px;color:#1c1c24;font-weight:normal;white-space:pre;">-1.33</div>
<div style="left:122.60px;width:41.70px;text-align:right;overflow:hidden;top:2.21px;height:14px;line-height:14px;font-size:10px;color:#1c1c24;font-weight:normal;white-space:pre;">878.27</div>
<div style="left:-2.20px;width:41.50px;text-align:right;overflow:hidden;top:18.05px;height:14px;line-height:14px;font-size:10px;color:#e8202a;font-weight:normal;white-space:pre;">111.50</div>
<div style="left:39.30px;width:41.70px;text-align:right;overflow:hidden;top:18.05px;height:14px;line-height:14px;font-size:10px;color:#1c1c24;font-weight:normal;white-space:pre;">54.26</div>
<div style="left:81.00px;width:41.60px;text-align:right;overflow:hidden;top:18.05px;height:14px;line-height:14px;font-size:10px;color:#1c1c24;font-weight:normal;white-space:pre;">-1.36</div>
<div style="left:122.60px;width:41.70px;text-align:right;overflow:hidden;top:18.05px;height:14px;line-height:14px;font-size:10px;color:#1c1c24;font-weight:normal;white-space:pre;">873.29</div>
</div>
<div style="left:648.30px;top:243.50px;width:14.70px;height:28.00px;background:#d3d9e5;"></div>
<svg style="left:650px;top:244px;width:11px;height:27px" viewBox="0 0 11 27"><path d="M2 7.5 L5.5 4 L9 7.5Z M2 18.5 L5.5 22 L9 18.5Z" fill="#6a7080"/></svg>
<div style="left:-2.00px;top:207.50px;width:308.00px;height:64.50px;background:transparent;border:1px solid #aab5ca;box-sizing:border-box;"></div>
<div style="left:308.50px;top:207.50px;width:355.00px;height:64.50px;background:transparent;border:1px solid #aab5ca;box-sizing:border-box;"></div>
<div style="left:0.00px;top:225.50px;width:305.00px;height:1.00px;background:#c4ccdc;"></div>
<div style="left:309.00px;top:225.50px;width:354.00px;height:1.00px;background:#c4ccdc;"></div>
<div style="left:-2.00px;top:282.00px;width:308.00px;height:312.00px;background:#c8d0de;border:1px solid #aab5ca;box-sizing:border-box;"></div>
<div style="left:-4.70px;top:283.20px;width:309.70px;height:17.30px;background:#f5f7fb;"></div>
<div style="left:-3.70px;width:42.10px;text-align:center;overflow:hidden;top:284.85px;height:14px;line-height:14px;font-size:10px;color:#3a3c4c;font-weight:normal;white-space:pre;">Delta</div>
<div style="left:40.40px;width:42.00px;text-align:center;overflow:hidden;top:284.85px;height:14px;line-height:14px;font-size:10px;color:#3a3c4c;font-weight:normal;white-space:pre;">Theta</div>
<div style="left:84.40px;width:42.10px;text-align:center;overflow:hidden;top:284.85px;height:14px;line-height:14px;font-size:10px;color:#3a3c4c;font-weight:normal;white-space:pre;">Vega</div>
<div style="left:128.50px;width:42.10px;text-align:center;overflow:hidden;top:284.85px;height:14px;line-height:14px;font-size:10px;color:#3a3c4c;font-weight:normal;white-space:pre;">OrigPri...</div>
<div style="left:172.60px;width:42.10px;text-align:center;overflow:hidden;top:284.85px;height:14px;line-height:14px;font-size:10px;color:#3a3c4c;font-weight:normal;white-space:pre;">IVChg</div>
<div style="left:216.70px;width:42.10px;text-align:center;overflow:hidden;top:284.85px;height:14px;line-height:14px;font-size:10px;color:#3a3c4c;font-weight:normal;white-space:pre;">Model</div>
<div style="left:260.80px;width:43.20px;text-align:center;overflow:hidden;top:284.85px;height:14px;line-height:14px;font-size:10px;color:#3a3c4c;font-weight:normal;white-space:pre;">Pos</div>
<div style="left:-4.70px;top:299.50px;width:309.70px;height:1.00px;background:#dbe0ea;"></div>
<div style="left:38.90px;top:283.20px;width:1.00px;height:17.30px;background:#dbe0ea;"></div>
<div style="left:82.90px;top:283.20px;width:1.00px;height:17.30px;background:#dbe0ea;"></div>
<div style="left:127.00px;top:283.20px;width:1.00px;height:17.30px;background:#dbe0ea;"></div>
<div style="left:171.10px;top:283.20px;width:1.00px;height:17.30px;background:#dbe0ea;"></div>
<div style="left:215.20px;top:283.20px;width:1.00px;height:17.30px;background:#dbe0ea;"></div>
<div style="left:259.30px;top:283.20px;width:1.00px;height:17.30px;background:#dbe0ea;"></div>
<div style="left:-4.70px;top:300.50px;width:309.70px;height:15.83px;background:#a8bfdd;"></div>
<div style="left:-4.70px;top:316.33px;width:309.70px;height:15.83px;background:#a8bfdd;"></div>
<div style="left:-4.70px;top:332.16px;width:309.70px;height:15.83px;background:#a8bfdd;"></div>
<div style="left:-4.70px;top:347.99px;width:309.70px;height:15.83px;background:#a8bfdd;"></div>
<div style="left:-4.70px;top:363.82px;width:309.70px;height:15.83px;background:#a8bfdd;"></div>
<div style="left:-4.70px;top:379.65px;width:309.70px;height:15.83px;background:#a8bfdd;"></div>
<div style="left:-4.70px;top:395.48px;width:309.70px;height:15.83px;background:#a8bfdd;"></div>
<div style="left:-4.70px;top:411.31px;width:309.70px;height:15.83px;background:#c5e4eb;"></div>
<div style="left:-4.70px;top:427.14px;width:309.70px;height:15.83px;background:#c5e4eb;"></div>
<div style="left:-4.70px;top:442.97px;width:309.70px;height:15.83px;background:#c5e4eb;"></div>
<div style="left:-4.70px;top:458.80px;width:309.70px;height:15.83px;background:#c5e4eb;"></div>
<div style="left:-4.70px;top:474.63px;width:309.70px;height:15.83px;background:#c5e4eb;"></div>
<div style="left:-4.70px;top:490.46px;width:309.70px;height:15.83px;background:#c5e4eb;"></div>
<div style="left:-4.70px;top:506.29px;width:309.70px;height:15.83px;background:#c5e4eb;"></div>
<div style="left:-4.70px;top:522.12px;width:309.70px;height:15.83px;background:#c5e4eb;"></div>
<div style="left:-4.70px;top:537.95px;width:309.70px;height:15.83px;background:#c5e4eb;"></div>
<div style="left:-4.70px;top:553.78px;width:309.70px;height:15.83px;background:#c5e4eb;"></div>
<div style="left:-4.70px;top:569.61px;width:309.70px;height:15.83px;background:#c5e4eb;"></div>
<div style="left:-4.70px;top:585.44px;width:309.70px;height:7.86px;background:#c5e4eb;"></div>
<div style="left:-4.70px;top:315.93px;width:309.70px;height:1.00px;background:#bccbe2;"></div>
<div style="left:38.90px;top:300.50px;width:1.00px;height:15.83px;background:#bccbe2;"></div>
<div style="left:82.90px;top:300.50px;width:1.00px;height:15.83px;background:#bccbe2;"></div>
<div style="left:127.00px;top:300.50px;width:1.00px;height:15.83px;background:#bccbe2;"></div>
<div style="left:171.10px;top:300.50px;width:1.00px;height:15.83px;background:#bccbe2;"></div>
<div style="left:215.20px;top:300.50px;width:1.00px;height:15.83px;background:#bccbe2;"></div>
<div style="left:259.30px;top:300.50px;width:1.00px;height:15.83px;background:#bccbe2;"></div>
<div style="left:-4.70px;top:331.76px;width:309.70px;height:1.00px;background:#bccbe2;"></div>
<div style="left:38.90px;top:316.33px;width:1.00px;height:15.83px;background:#bccbe2;"></div>
<div style="left:82.90px;top:316.33px;width:1.00px;height:15.83px;background:#bccbe2;"></div>
<div style="left:127.00px;top:316.33px;width:1.00px;height:15.83px;background:#bccbe2;"></div>
<div style="left:171.10px;top:316.33px;width:1.00px;height:15.83px;background:#bccbe2;"></div>
<div style="left:215.20px;top:316.33px;width:1.00px;height:15.83px;background:#bccbe2;"></div>
<div style="left:259.30px;top:316.33px;width:1.00px;height:15.83px;background:#bccbe2;"></div>
<div style="left:-4.70px;top:347.59px;width:309.70px;height:1.00px;background:#bccbe2;"></div>
<div style="left:38.90px;top:332.16px;width:1.00px;height:15.83px;background:#bccbe2;"></div>
<div style="left:82.90px;top:332.16px;width:1.00px;height:15.83px;background:#bccbe2;"></div>
<div style="left:127.00px;top:332.16px;width:1.00px;height:15.83px;background:#bccbe2;"></div>
<div style="left:171.10px;top:332.16px;width:1.00px;height:15.83px;background:#bccbe2;"></div>
<div style="left:215.20px;top:332.16px;width:1.00px;height:15.83px;background:#bccbe2;"></div>
<div style="left:259.30px;top:332.16px;width:1.00px;height:15.83px;background:#bccbe2;"></div>
<div style="left:-4.70px;top:363.42px;width:309.70px;height:1.00px;background:#bccbe2;"></div>
<div style="left:38.90px;top:347.99px;width:1.00px;height:15.83px;background:#bccbe2;"></div>
<div style="left:82.90px;top:347.99px;width:1.00px;height:15.83px;background:#bccbe2;"></div>
<div style="left:127.00px;top:347.99px;width:1.00px;height:15.83px;background:#bccbe2;"></div>
<div style="left:171.10px;top:347.99px;width:1.00px;height:15.83px;background:#bccbe2;"></div>
<div style="left:215.20px;top:347.99px;width:1.00px;height:15.83px;background:#bccbe2;"></div>
<div style="left:259.30px;top:347.99px;width:1.00px;height:15.83px;background:#bccbe2;"></div>
<div style="left:-4.70px;top:379.25px;width:309.70px;height:1.00px;background:#bccbe2;"></div>
<div style="left:38.90px;top:363.82px;width:1.00px;height:15.83px;background:#bccbe2;"></div>
<div style="left:82.90px;top:363.82px;width:1.00px;height:15.83px;background:#bccbe2;"></div>
<div style="left:127.00px;top:363.82px;width:1.00px;height:15.83px;background:#bccbe2;"></div>
<div style="left:171.10px;top:363.82px;width:1.00px;height:15.83px;background:#bccbe2;"></div>
<div style="left:215.20px;top:363.82px;width:1.00px;height:15.83px;background:#bccbe2;"></div>
<div style="left:259.30px;top:363.82px;width:1.00px;height:15.83px;background:#bccbe2;"></div>
<div style="left:-4.70px;top:395.08px;width:309.70px;height:1.00px;background:#bccbe2;"></div>
<div style="left:38.90px;top:379.65px;width:1.00px;height:15.83px;background:#bccbe2;"></div>
<div style="left:82.90px;top:379.65px;width:1.00px;height:15.83px;background:#bccbe2;"></div>
<div style="left:127.00px;top:379.65px;width:1.00px;height:15.83px;background:#bccbe2;"></div>
<div style="left:171.10px;top:379.65px;width:1.00px;height:15.83px;background:#bccbe2;"></div>
<div style="left:215.20px;top:379.65px;width:1.00px;height:15.83px;background:#bccbe2;"></div>
<div style="left:259.30px;top:379.65px;width:1.00px;height:15.83px;background:#bccbe2;"></div>
<div style="left:-4.70px;top:410.91px;width:309.70px;height:1.00px;background:#d3d6e6;"></div>
<div style="left:38.90px;top:395.48px;width:1.00px;height:15.83px;background:#bccbe2;"></div>
<div style="left:82.90px;top:395.48px;width:1.00px;height:15.83px;background:#bccbe2;"></div>
<div style="left:127.00px;top:395.48px;width:1.00px;height:15.83px;background:#bccbe2;"></div>
<div style="left:171.10px;top:395.48px;width:1.00px;height:15.83px;background:#bccbe2;"></div>
<div style="left:215.20px;top:395.48px;width:1.00px;height:15.83px;background:#bccbe2;"></div>
<div style="left:259.30px;top:395.48px;width:1.00px;height:15.83px;background:#bccbe2;"></div>
<div style="left:-4.70px;top:426.74px;width:309.70px;height:1.00px;background:#d3d6e6;"></div>
<div style="left:38.90px;top:411.31px;width:1.00px;height:15.83px;background:#d3d6e6;"></div>
<div style="left:82.90px;top:411.31px;width:1.00px;height:15.83px;background:#d3d6e6;"></div>
<div style="left:127.00px;top:411.31px;width:1.00px;height:15.83px;background:#d3d6e6;"></div>
<div style="left:171.10px;top:411.31px;width:1.00px;height:15.83px;background:#d3d6e6;"></div>
<div style="left:215.20px;top:411.31px;width:1.00px;height:15.83px;background:#d3d6e6;"></div>
<div style="left:259.30px;top:411.31px;width:1.00px;height:15.83px;background:#d3d6e6;"></div>
<div style="left:-4.70px;top:442.57px;width:309.70px;height:1.00px;background:#d3d6e6;"></div>
<div style="left:38.90px;top:427.14px;width:1.00px;height:15.83px;background:#d3d6e6;"></div>
<div style="left:82.90px;top:427.14px;width:1.00px;height:15.83px;background:#d3d6e6;"></div>
<div style="left:127.00px;top:427.14px;width:1.00px;height:15.83px;background:#d3d6e6;"></div>
<div style="left:171.10px;top:427.14px;width:1.00px;height:15.83px;background:#d3d6e6;"></div>
<div style="left:215.20px;top:427.14px;width:1.00px;height:15.83px;background:#d3d6e6;"></div>
<div style="left:259.30px;top:427.14px;width:1.00px;height:15.83px;background:#d3d6e6;"></div>
<div style="left:-4.70px;top:458.40px;width:309.70px;height:1.00px;background:#d3d6e6;"></div>
<div style="left:38.90px;top:442.97px;width:1.00px;height:15.83px;background:#d3d6e6;"></div>
<div style="left:82.90px;top:442.97px;width:1.00px;height:15.83px;background:#d3d6e6;"></div>
<div style="left:127.00px;top:442.97px;width:1.00px;height:15.83px;background:#d3d6e6;"></div>
<div style="left:171.10px;top:442.97px;width:1.00px;height:15.83px;background:#d3d6e6;"></div>
<div style="left:215.20px;top:442.97px;width:1.00px;height:15.83px;background:#d3d6e6;"></div>
<div style="left:259.30px;top:442.97px;width:1.00px;height:15.83px;background:#d3d6e6;"></div>
<div style="left:-4.70px;top:474.23px;width:309.70px;height:1.00px;background:#d3d6e6;"></div>
<div style="left:38.90px;top:458.80px;width:1.00px;height:15.83px;background:#d3d6e6;"></div>
<div style="left:82.90px;top:458.80px;width:1.00px;height:15.83px;background:#d3d6e6;"></div>
<div style="left:127.00px;top:458.80px;width:1.00px;height:15.83px;background:#d3d6e6;"></div>
<div style="left:171.10px;top:458.80px;width:1.00px;height:15.83px;background:#d3d6e6;"></div>
<div style="left:215.20px;top:458.80px;width:1.00px;height:15.83px;background:#d3d6e6;"></div>
<div style="left:259.30px;top:458.80px;width:1.00px;height:15.83px;background:#d3d6e6;"></div>
<div style="left:-4.70px;top:490.06px;width:309.70px;height:1.00px;background:#d3d6e6;"></div>
<div style="left:38.90px;top:474.63px;width:1.00px;height:15.83px;background:#d3d6e6;"></div>
<div style="left:82.90px;top:474.63px;width:1.00px;height:15.83px;background:#d3d6e6;"></div>
<div style="left:127.00px;top:474.63px;width:1.00px;height:15.83px;background:#d3d6e6;"></div>
<div style="left:171.10px;top:474.63px;width:1.00px;height:15.83px;background:#d3d6e6;"></div>
<div style="left:215.20px;top:474.63px;width:1.00px;height:15.83px;background:#d3d6e6;"></div>
<div style="left:259.30px;top:474.63px;width:1.00px;height:15.83px;background:#d3d6e6;"></div>
<div style="left:-4.70px;top:505.89px;width:309.70px;height:1.00px;background:#d3d6e6;"></div>
<div style="left:38.90px;top:490.46px;width:1.00px;height:15.83px;background:#d3d6e6;"></div>
<div style="left:82.90px;top:490.46px;width:1.00px;height:15.83px;background:#d3d6e6;"></div>
<div style="left:127.00px;top:490.46px;width:1.00px;height:15.83px;background:#d3d6e6;"></div>
<div style="left:171.10px;top:490.46px;width:1.00px;height:15.83px;background:#d3d6e6;"></div>
<div style="left:215.20px;top:490.46px;width:1.00px;height:15.83px;background:#d3d6e6;"></div>
<div style="left:259.30px;top:490.46px;width:1.00px;height:15.83px;background:#d3d6e6;"></div>
<div style="left:-4.70px;top:521.72px;width:309.70px;height:1.00px;background:#d3d6e6;"></div>
<div style="left:38.90px;top:506.29px;width:1.00px;height:15.83px;background:#d3d6e6;"></div>
<div style="left:82.90px;top:506.29px;width:1.00px;height:15.83px;background:#d3d6e6;"></div>
<div style="left:127.00px;top:506.29px;width:1.00px;height:15.83px;background:#d3d6e6;"></div>
<div style="left:171.10px;top:506.29px;width:1.00px;height:15.83px;background:#d3d6e6;"></div>
<div style="left:215.20px;top:506.29px;width:1.00px;height:15.83px;background:#d3d6e6;"></div>
<div style="left:259.30px;top:506.29px;width:1.00px;height:15.83px;background:#d3d6e6;"></div>
<div style="left:-4.70px;top:537.55px;width:309.70px;height:1.00px;background:#d3d6e6;"></div>
<div style="left:38.90px;top:522.12px;width:1.00px;height:15.83px;background:#d3d6e6;"></div>
<div style="left:82.90px;top:522.12px;width:1.00px;height:15.83px;background:#d3d6e6;"></div>
<div style="left:127.00px;top:522.12px;width:1.00px;height:15.83px;background:#d3d6e6;"></div>
<div style="left:171.10px;top:522.12px;width:1.00px;height:15.83px;background:#d3d6e6;"></div>
<div style="left:215.20px;top:522.12px;width:1.00px;height:15.83px;background:#d3d6e6;"></div>
<div style="left:259.30px;top:522.12px;width:1.00px;height:15.83px;background:#d3d6e6;"></div>
<div style="left:-4.70px;top:553.38px;width:309.70px;height:1.00px;background:#d3d6e6;"></div>
<div style="left:38.90px;top:537.95px;width:1.00px;height:15.83px;background:#d3d6e6;"></div>
<div style="left:82.90px;top:537.95px;width:1.00px;height:15.83px;background:#d3d6e6;"></div>
<div style="left:127.00px;top:537.95px;width:1.00px;height:15.83px;background:#d3d6e6;"></div>
<div style="left:171.10px;top:537.95px;width:1.00px;height:15.83px;background:#d3d6e6;"></div>
<div style="left:215.20px;top:537.95px;width:1.00px;height:15.83px;background:#d3d6e6;"></div>
<div style="left:259.30px;top:537.95px;width:1.00px;height:15.83px;background:#d3d6e6;"></div>
<div style="left:-4.70px;top:569.21px;width:309.70px;height:1.00px;background:#d3d6e6;"></div>
<div style="left:38.90px;top:553.78px;width:1.00px;height:15.83px;background:#d3d6e6;"></div>
<div style="left:82.90px;top:553.78px;width:1.00px;height:15.83px;background:#d3d6e6;"></div>
<div style="left:127.00px;top:553.78px;width:1.00px;height:15.83px;background:#d3d6e6;"></div>
<div style="left:171.10px;top:553.78px;width:1.00px;height:15.83px;background:#d3d6e6;"></div>
<div style="left:215.20px;top:553.78px;width:1.00px;height:15.83px;background:#d3d6e6;"></div>
<div style="left:259.30px;top:553.78px;width:1.00px;height:15.83px;background:#d3d6e6;"></div>
<div style="left:-4.70px;top:585.04px;width:309.70px;height:1.00px;background:#d3d6e6;"></div>
<div style="left:38.90px;top:569.61px;width:1.00px;height:15.83px;background:#d3d6e6;"></div>
<div style="left:82.90px;top:569.61px;width:1.00px;height:15.83px;background:#d3d6e6;"></div>
<div style="left:127.00px;top:569.61px;width:1.00px;height:15.83px;background:#d3d6e6;"></div>
<div style="left:171.10px;top:569.61px;width:1.00px;height:15.83px;background:#d3d6e6;"></div>
<div style="left:215.20px;top:569.61px;width:1.00px;height:15.83px;background:#d3d6e6;"></div>
<div style="left:259.30px;top:569.61px;width:1.00px;height:15.83px;background:#d3d6e6;"></div>
<div style="left:38.90px;top:585.44px;width:1.00px;height:7.86px;background:#d3d6e6;"></div>
<div style="left:82.90px;top:585.44px;width:1.00px;height:7.86px;background:#d3d6e6;"></div>
<div style="left:127.00px;top:585.44px;width:1.00px;height:7.86px;background:#d3d6e6;"></div>
<div style="left:171.10px;top:585.44px;width:1.00px;height:7.86px;background:#d3d6e6;"></div>
<div style="left:215.20px;top:585.44px;width:1.00px;height:7.86px;background:#d3d6e6;"></div>
<div style="left:259.30px;top:585.44px;width:1.00px;height:7.86px;background:#d3d6e6;"></div>
<div style="left:-4.70px;top:300.50px;width:309.70px;height:292.80px;overflow:hidden">
<div style="left:-2.20px;width:44.10px;text-align:right;overflow:hidden;top:2.21px;height:14px;line-height:14px;font-size:10px;color:#1c1c24;font-weight:normal;white-space:pre;">-31.19</div>
<div style="left:41.90px;width:44.00px;text-align:right;overflow:hidden;top:2.21px;height:14px;line-height:14px;font-size:10px;color:#1c1c24;font-weight:normal;white-space:pre;">-1.15</div>
<div style="left:85.90px;width:44.10px;text-align:right;overflow:hidden;top:2.21px;height:14px;line-height:14px;font-size:10px;color:#1c1c24;font-weight:normal;white-space:pre;">725.52</div>
<div style="left:-2.20px;width:44.10px;text-align:right;overflow:hidden;top:18.05px;height:14px;line-height:14px;font-size:10px;color:#1c1c24;font-weight:normal;white-space:pre;">-29.00</div>
<div style="left:41.90px;width:44.00px;text-align:right;overflow:hidden;top:18.05px;height:14px;line-height:14px;font-size:10px;color:#1c1c24;font-weight:normal;white-space:pre;">-1.14</div>
<div style="left:85.90px;width:44.10px;text-align:right;overflow:hidden;top:18.05px;height:14px;line-height:14px;font-size:10px;color:#1c1c24;font-weight:normal;white-space:pre;">702.15</div>
<div style="left:-2.20px;width:44.10px;text-align:right;overflow:hidden;top:33.88px;height:14px;line-height:14px;font-size:10px;color:#1c1c24;font-weight:normal;white-space:pre;">-27.01</div>
<div style="left:41.90px;width:44.00px;text-align:right;overflow:hidden;top:33.88px;height:14px;line-height:14px;font-size:10px;color:#1c1c24;font-weight:normal;white-space:pre;">-1.13</div>
<div style="left:85.90px;width:44.10px;text-align:right;overflow:hidden;top:33.88px;height:14px;line-height:14px;font-size:10px;color:#1c1c24;font-weight:normal;white-space:pre;">678.32</div>
<div style="left:-2.20px;width:44.10px;text-align:right;overflow:hidden;top:49.70px;height:14px;line-height:14px;font-size:10px;color:#1c1c24;font-weight:normal;white-space:pre;">-25.10</div>
<div style="left:41.90px;width:44.00px;text-align:right;overflow:hidden;top:49.70px;height:14px;line-height:14px;font-size:10px;color:#1c1c24;font-weight:normal;white-space:pre;">-1.12</div>
<div style="left:85.90px;width:44.10px;text-align:right;overflow:hidden;top:49.70px;height:14px;line-height:14px;font-size:10px;color:#1c1c24;font-weight:normal;white-space:pre;">653.17</div>
<div style="left:-2.20px;width:44.10px;text-align:right;overflow:hidden;top:65.53px;height:14px;line-height:14px;font-size:10px;color:#1c1c24;font-weight:normal;white-space:pre;">-23.34</div>
<div style="left:41.90px;width:44.00px;text-align:right;overflow:hidden;top:65.53px;height:14px;line-height:14px;font-size:10px;color:#1c1c24;font-weight:normal;white-space:pre;">-1.11</div>
<div style="left:85.90px;width:44.10px;text-align:right;overflow:hidden;top:65.53px;height:14px;line-height:14px;font-size:10px;color:#1c1c24;font-weight:normal;white-space:pre;">627.89</div>
<div style="left:-2.20px;width:44.10px;text-align:right;overflow:hidden;top:81.37px;height:14px;line-height:14px;font-size:10px;color:#1c1c24;font-weight:normal;white-space:pre;">-21.70</div>
<div style="left:41.90px;width:44.00px;text-align:right;overflow:hidden;top:81.37px;height:14px;line-height:14px;font-size:10px;color:#1c1c24;font-weight:normal;white-space:pre;">-1.09</div>
<div style="left:85.90px;width:44.10px;text-align:right;overflow:hidden;top:81.37px;height:14px;line-height:14px;font-size:10px;color:#1c1c24;font-weight:normal;white-space:pre;">602.46</div>
<div style="left:-2.20px;width:44.10px;text-align:right;overflow:hidden;top:97.20px;height:14px;line-height:14px;font-size:10px;color:#1c1c24;font-weight:normal;white-space:pre;">-20.17</div>
<div style="left:41.90px;width:44.00px;text-align:right;overflow:hidden;top:97.20px;height:14px;line-height:14px;font-size:10px;color:#1c1c24;font-weight:normal;white-space:pre;">-1.07</div>
<div style="left:85.90px;width:44.10px;text-align:right;overflow:hidden;top:97.20px;height:14px;line-height:14px;font-size:10px;color:#1c1c24;font-weight:normal;white-space:pre;">577.22</div>
<div style="left:-2.20px;width:44.10px;text-align:right;overflow:hidden;top:113.03px;height:14px;line-height:14px;font-size:10px;color:#1c1c24;font-weight:normal;white-space:pre;">-18.76</div>
<div style="left:41.90px;width:44.00px;text-align:right;overflow:hidden;top:113.03px;height:14px;line-height:14px;font-size:10px;color:#1c1c24;font-weight:normal;white-space:pre;">-1.05</div>
<div style="left:85.90px;width:44.10px;text-align:right;overflow:hidden;top:113.03px;height:14px;line-height:14px;font-size:10px;color:#1c1c24;font-weight:normal;white-space:pre;">552.25</div>
<div style="left:-2.20px;width:44.10px;text-align:right;overflow:hidden;top:128.86px;height:14px;line-height:14px;font-size:10px;color:#1c1c24;font-weight:normal;white-space:pre;">-17.47</div>
<div style="left:41.90px;width:44.00px;text-align:right;overflow:hidden;top:128.86px;height:14px;line-height:14px;font-size:10px;color:#1c1c24;font-weight:normal;white-space:pre;">-1.03</div>
<div style="left:85.90px;width:44.10px;text-align:right;overflow:hidden;top:128.86px;height:14px;line-height:14px;font-size:10px;color:#1c1c24;font-weight:normal;white-space:pre;">528.20</div>
<div style="left:-2.20px;width:44.10px;text-align:right;overflow:hidden;top:144.69px;height:14px;line-height:14px;font-size:10px;color:#1c1c24;font-weight:normal;white-space:pre;">-16.26</div>
<div style="left:41.90px;width:44.00px;text-align:right;overflow:hidden;top:144.69px;height:14px;line-height:14px;font-size:10px;color:#1c1c24;font-weight:normal;white-space:pre;">-1.00</div>
<div style="left:85.90px;width:44.10px;text-align:right;overflow:hidden;top:144.69px;height:14px;line-height:14px;font-size:10px;color:#1c1c24;font-weight:normal;white-space:pre;">504.28</div>
<div style="left:-2.20px;width:44.10px;text-align:right;overflow:hidden;top:160.52px;height:14px;line-height:14px;font-size:10px;color:#1c1c24;font-weight:normal;white-space:pre;">-15.11</div>
<div style="left:41.90px;width:44.00px;text-align:right;overflow:hidden;top:160.52px;height:14px;line-height:14px;font-size:10px;color:#1c1c24;font-weight:normal;white-space:pre;">-0.98</div>
<div style="left:85.90px;width:44.10px;text-align:right;overflow:hidden;top:160.52px;height:14px;line-height:14px;font-size:10px;color:#1c1c24;font-weight:normal;white-space:pre;">480.63</div>
<div style="left:-2.20px;width:44.10px;text-align:right;overflow:hidden;top:176.35px;height:14px;line-height:14px;font-size:10px;color:#1c1c24;font-weight:normal;white-space:pre;">-14.01</div>
<div style="left:41.90px;width:44.00px;text-align:right;overflow:hidden;top:176.35px;height:14px;line-height:14px;font-size:10px;color:#1c1c24;font-weight:normal;white-space:pre;">-0.95</div>
<div style="left:85.90px;width:44.10px;text-align:right;overflow:hidden;top:176.35px;height:14px;line-height:14px;font-size:10px;color:#1c1c24;font-weight:normal;white-space:pre;">456.86</div>
<div style="left:-2.20px;width:44.10px;text-align:right;overflow:hidden;top:192.18px;height:14px;line-height:14px;font-size:10px;color:#1c1c24;font-weight:normal;white-space:pre;">-13.09</div>
<div style="left:41.90px;width:44.00px;text-align:right;overflow:hidden;top:192.18px;height:14px;line-height:14px;font-size:10px;color:#1c1c24;font-weight:normal;white-space:pre;">-0.92</div>
<div style="left:85.90px;width:44.10px;text-align:right;overflow:hidden;top:192.18px;height:14px;line-height:14px;font-size:10px;color:#1c1c24;font-weight:normal;white-space:pre;">435.89</div>
<div style="left:-2.20px;width:44.10px;text-align:right;overflow:hidden;top:208.01px;height:14px;line-height:14px;font-size:10px;color:#1c1c24;font-weight:normal;white-space:pre;">-12.20</div>
<div style="left:41.90px;width:44.00px;text-align:right;overflow:hidden;top:208.01px;height:14px;line-height:14px;font-size:10px;color:#1c1c24;font-weight:normal;white-space:pre;">-0.90</div>
<div style="left:85.90px;width:44.10px;text-align:right;overflow:hidden;top:208.01px;height:14px;line-height:14px;font-size:10px;color:#1c1c24;font-weight:normal;white-space:pre;">415.16</div>
<div style="left:-2.20px;width:44.10px;text-align:right;overflow:hidden;top:223.84px;height:14px;line-height:14px;font-size:10px;color:#1c1c24;font-weight:normal;white-space:pre;">-11.38</div>
<div style="left:41.90px;width:44.00px;text-align:right;overflow:hidden;top:223.84px;height:14px;line-height:14px;font-size:10px;color:#1c1c24;font-weight:normal;white-space:pre;">-0.87</div>
<div style="left:85.90px;width:44.10px;text-align:right;overflow:hidden;top:223.84px;height:14px;line-height:14px;font-size:10px;color:#1c1c24;font-weight:normal;white-space:pre;">395.23</div>
<div style="left:-2.20px;width:44.10px;text-align:right;overflow:hidden;top:239.67px;height:14px;line-height:14px;font-size:10px;color:#1c1c24;font-weight:normal;white-space:pre;">-10.61</div>
<div style="left:41.90px;width:44.00px;text-align:right;overflow:hidden;top:239.67px;height:14px;line-height:14px;font-size:10px;color:#1c1c24;font-weight:normal;white-space:pre;">-0.84</div>
<div style="left:85.90px;width:44.10px;text-align:right;overflow:hidden;top:239.67px;height:14px;line-height:14px;font-size:10px;color:#1c1c24;font-weight:normal;white-space:pre;">375.86</div>
<div style="left:-2.20px;width:44.10px;text-align:right;overflow:hidden;top:255.50px;height:14px;line-height:14px;font-size:10px;color:#1c1c24;font-weight:normal;white-space:pre;">-9.90</div>
<div style="left:41.90px;width:44.00px;text-align:right;overflow:hidden;top:255.50px;height:14px;line-height:14px;font-size:10px;color:#1c1c24;font-weight:normal;white-space:pre;">-0.82</div>
<div style="left:85.90px;width:44.10px;text-align:right;overflow:hidden;top:255.50px;height:14px;line-height:14px;font-size:10px;color:#1c1c24;font-weight:normal;white-space:pre;">357.32</div>
<div style="left:-2.20px;width:44.10px;text-align:right;overflow:hidden;top:271.33px;height:14px;line-height:14px;font-size:10px;color:#1c1c24;font-weight:normal;white-space:pre;">-9.27</div>
<div style="left:41.90px;width:44.00px;text-align:right;overflow:hidden;top:271.33px;height:14px;line-height:14px;font-size:10px;color:#1c1c24;font-weight:normal;white-space:pre;">-0.80</div>
<div style="left:85.90px;width:44.10px;text-align:right;overflow:hidden;top:271.33px;height:14px;line-height:14px;font-size:10px;color:#1c1c24;font-weight:normal;white-space:pre;">340.55</div>
<div style="left:-2.20px;width:44.10px;text-align:right;overflow:hidden;top:287.16px;height:14px;line-height:14px;font-size:10px;color:#1c1c24;font-weight:normal;white-space:pre;">-8.62</div>
<div style="left:41.90px;width:44.00px;text-align:right;overflow:hidden;top:287.16px;height:14px;line-height:14px;font-size:10px;color:#1c1c24;font-weight:normal;white-space:pre;">-0.77</div>
<div style="left:85.90px;width:44.10px;text-align:right;overflow:hidden;top:287.16px;height:14px;line-height:14px;font-size:10px;color:#1c1c24;font-weight:normal;white-space:pre;">322.80</div>
</div>
<div style="left:308.50px;top:282.00px;width:355.00px;height:312.00px;background:#c8d0de;border:1px solid #aab5ca;box-sizing:border-box;"></div>
<div style="left:309.50px;top:283.20px;width:353.00px;height:17.30px;background:#f5f7fb;"></div>
<div style="left:310.50px;width:39.50px;text-align:center;overflow:hidden;top:284.85px;height:14px;line-height:14px;font-size:10px;color:#3a3c4c;font-weight:normal;white-space:pre;">Mid</div>
<div style="left:352.00px;width:39.70px;text-align:center;overflow:hidden;top:284.85px;height:14px;line-height:14px;font-size:10px;color:#3a3c4c;font-weight:normal;white-space:pre;">Delta</div>
<div style="left:393.70px;width:39.60px;text-align:center;overflow:hidden;top:284.85px;height:14px;line-height:14px;font-size:10px;color:#3a3c4c;font-weight:normal;white-space:pre;">Theta</div>
<div style="left:435.30px;width:39.70px;text-align:center;overflow:hidden;top:284.85px;height:14px;line-height:14px;font-size:10px;color:#3a3c4c;font-weight:normal;white-space:pre;">Vega</div>
<div style="left:477.00px;width:40.30px;text-align:center;overflow:hidden;top:284.85px;height:14px;line-height:14px;font-size:10px;color:#3a3c4c;font-weight:normal;white-space:pre;">OrigPr...</div>
<div style="left:519.30px;width:39.70px;text-align:center;overflow:hidden;top:284.85px;height:14px;line-height:14px;font-size:10px;color:#3a3c4c;font-weight:normal;white-space:pre;">IVChg</div>
<div style="left:561.00px;width:40.70px;text-align:center;overflow:hidden;top:284.85px;height:14px;line-height:14px;font-size:10px;color:#3a3c4c;font-weight:normal;white-space:pre;">Model</div>
<div style="left:603.70px;width:43.60px;text-align:center;overflow:hidden;top:284.85px;height:14px;line-height:14px;font-size:10px;color:#3a3c4c;font-weight:normal;white-space:pre;">Pos</div>
<div style="left:309.50px;top:299.50px;width:353.00px;height:1.00px;background:#dbe0ea;"></div>
<div style="left:350.50px;top:283.20px;width:1.00px;height:17.30px;background:#dbe0ea;"></div>
<div style="left:392.20px;top:283.20px;width:1.00px;height:17.30px;background:#dbe0ea;"></div>
<div style="left:433.80px;top:283.20px;width:1.00px;height:17.30px;background:#dbe0ea;"></div>
<div style="left:475.50px;top:283.20px;width:1.00px;height:17.30px;background:#dbe0ea;"></div>
<div style="left:517.80px;top:283.20px;width:1.00px;height:17.30px;background:#dbe0ea;"></div>
<div style="left:559.50px;top:283.20px;width:1.00px;height:17.30px;background:#dbe0ea;"></div>
<div style="left:602.20px;top:283.20px;width:1.00px;height:17.30px;background:#dbe0ea;"></div>
<div style="left:647.80px;top:283.20px;width:1.00px;height:17.30px;background:#dbe0ea;"></div>
<div style="left:309.50px;top:300.50px;width:353.00px;height:15.83px;background:#a8bfdd;"></div>
<div style="left:309.50px;top:316.33px;width:353.00px;height:15.83px;background:#a8bfdd;"></div>
<div style="left:309.50px;top:332.16px;width:353.00px;height:15.83px;background:#a8bfdd;"></div>
<div style="left:309.50px;top:347.99px;width:353.00px;height:15.83px;background:#a8bfdd;"></div>
<div style="left:309.50px;top:363.82px;width:353.00px;height:15.83px;background:#a8bfdd;"></div>
<div style="left:309.50px;top:379.65px;width:353.00px;height:15.83px;background:#a8bfdd;"></div>
<div style="left:309.50px;top:395.48px;width:353.00px;height:15.83px;background:#a8bfdd;"></div>
<div style="left:309.50px;top:411.31px;width:353.00px;height:15.83px;background:#a8bfdd;"></div>
<div style="left:309.50px;top:427.14px;width:353.00px;height:15.83px;background:#c5e4eb;"></div>
<div style="left:309.50px;top:442.97px;width:353.00px;height:15.83px;background:#c5e4eb;"></div>
<div style="left:309.50px;top:458.80px;width:353.00px;height:15.83px;background:#c5e4eb;"></div>
<div style="left:309.50px;top:474.63px;width:353.00px;height:15.83px;background:#c5e4eb;"></div>
<div style="left:309.50px;top:490.46px;width:353.00px;height:15.83px;background:#c5e4eb;"></div>
<div style="left:309.50px;top:506.29px;width:353.00px;height:15.83px;background:#c5e4eb;"></div>
<div style="left:309.50px;top:522.12px;width:353.00px;height:15.83px;background:#c5e4eb;"></div>
<div style="left:309.50px;top:537.95px;width:353.00px;height:15.83px;background:#c5e4eb;"></div>
<div style="left:309.50px;top:553.78px;width:353.00px;height:15.83px;background:#c5e4eb;"></div>
<div style="left:309.50px;top:569.61px;width:353.00px;height:15.83px;background:#c5e4eb;"></div>
<div style="left:309.50px;top:585.44px;width:353.00px;height:7.86px;background:#c5e4eb;"></div>
<div style="left:309.50px;top:315.93px;width:353.00px;height:1.00px;background:#bccbe2;"></div>
<div style="left:350.50px;top:300.50px;width:1.00px;height:15.83px;background:#bccbe2;"></div>
<div style="left:392.20px;top:300.50px;width:1.00px;height:15.83px;background:#bccbe2;"></div>
<div style="left:433.80px;top:300.50px;width:1.00px;height:15.83px;background:#bccbe2;"></div>
<div style="left:475.50px;top:300.50px;width:1.00px;height:15.83px;background:#bccbe2;"></div>
<div style="left:517.80px;top:300.50px;width:1.00px;height:15.83px;background:#bccbe2;"></div>
<div style="left:559.50px;top:300.50px;width:1.00px;height:15.83px;background:#bccbe2;"></div>
<div style="left:602.20px;top:300.50px;width:1.00px;height:15.83px;background:#bccbe2;"></div>
<div style="left:647.80px;top:300.50px;width:1.00px;height:15.83px;background:#bccbe2;"></div>
<div style="left:309.50px;top:331.76px;width:353.00px;height:1.00px;background:#bccbe2;"></div>
<div style="left:350.50px;top:316.33px;width:1.00px;height:15.83px;background:#bccbe2;"></div>
<div style="left:392.20px;top:316.33px;width:1.00px;height:15.83px;background:#bccbe2;"></div>
<div style="left:433.80px;top:316.33px;width:1.00px;height:15.83px;background:#bccbe2;"></div>
<div style="left:475.50px;top:316.33px;width:1.00px;height:15.83px;background:#bccbe2;"></div>
<div style="left:517.80px;top:316.33px;width:1.00px;height:15.83px;background:#bccbe2;"></div>
<div style="left:559.50px;top:316.33px;width:1.00px;height:15.83px;background:#bccbe2;"></div>
<div style="left:602.20px;top:316.33px;width:1.00px;height:15.83px;background:#bccbe2;"></div>
<div style="left:647.80px;top:316.33px;width:1.00px;height:15.83px;background:#bccbe2;"></div>
<div style="left:309.50px;top:347.59px;width:353.00px;height:1.00px;background:#bccbe2;"></div>
<div style="left:350.50px;top:332.16px;width:1.00px;height:15.83px;background:#bccbe2;"></div>
<div style="left:392.20px;top:332.16px;width:1.00px;height:15.83px;background:#bccbe2;"></div>
<div style="left:433.80px;top:332.16px;width:1.00px;height:15.83px;background:#bccbe2;"></div>
<div style="left:475.50px;top:332.16px;width:1.00px;height:15.83px;background:#bccbe2;"></div>
<div style="left:517.80px;top:332.16px;width:1.00px;height:15.83px;background:#bccbe2;"></div>
<div style="left:559.50px;top:332.16px;width:1.00px;height:15.83px;background:#bccbe2;"></div>
<div style="left:602.20px;top:332.16px;width:1.00px;height:15.83px;background:#bccbe2;"></div>
<div style="left:647.80px;top:332.16px;width:1.00px;height:15.83px;background:#bccbe2;"></div>
<div style="left:309.50px;top:363.42px;width:353.00px;height:1.00px;background:#bccbe2;"></div>
<div style="left:350.50px;top:347.99px;width:1.00px;height:15.83px;background:#bccbe2;"></div>
<div style="left:392.20px;top:347.99px;width:1.00px;height:15.83px;background:#bccbe2;"></div>
<div style="left:433.80px;top:347.99px;width:1.00px;height:15.83px;background:#bccbe2;"></div>
<div style="left:475.50px;top:347.99px;width:1.00px;height:15.83px;background:#bccbe2;"></div>
<div style="left:517.80px;top:347.99px;width:1.00px;height:15.83px;background:#bccbe2;"></div>
<div style="left:559.50px;top:347.99px;width:1.00px;height:15.83px;background:#bccbe2;"></div>
<div style="left:602.20px;top:347.99px;width:1.00px;height:15.83px;background:#bccbe2;"></div>
<div style="left:647.80px;top:347.99px;width:1.00px;height:15.83px;background:#bccbe2;"></div>
<div style="left:309.50px;top:379.25px;width:353.00px;height:1.00px;background:#bccbe2;"></div>
<div style="left:350.50px;top:363.82px;width:1.00px;height:15.83px;background:#bccbe2;"></div>
<div style="left:392.20px;top:363.82px;width:1.00px;height:15.83px;background:#bccbe2;"></div>
<div style="left:433.80px;top:363.82px;width:1.00px;height:15.83px;background:#bccbe2;"></div>
<div style="left:475.50px;top:363.82px;width:1.00px;height:15.83px;background:#bccbe2;"></div>
<div style="left:517.80px;top:363.82px;width:1.00px;height:15.83px;background:#bccbe2;"></div>
<div style="left:559.50px;top:363.82px;width:1.00px;height:15.83px;background:#bccbe2;"></div>
<div style="left:602.20px;top:363.82px;width:1.00px;height:15.83px;background:#bccbe2;"></div>
<div style="left:647.80px;top:363.82px;width:1.00px;height:15.83px;background:#bccbe2;"></div>
<div style="left:309.50px;top:395.08px;width:353.00px;height:1.00px;background:#bccbe2;"></div>
<div style="left:350.50px;top:379.65px;width:1.00px;height:15.83px;background:#bccbe2;"></div>
<div style="left:392.20px;top:379.65px;width:1.00px;height:15.83px;background:#bccbe2;"></div>
<div style="left:433.80px;top:379.65px;width:1.00px;height:15.83px;background:#bccbe2;"></div>
<div style="left:475.50px;top:379.65px;width:1.00px;height:15.83px;background:#bccbe2;"></div>
<div style="left:517.80px;top:379.65px;width:1.00px;height:15.83px;background:#bccbe2;"></div>
<div style="left:559.50px;top:379.65px;width:1.00px;height:15.83px;background:#bccbe2;"></div>
<div style="left:602.20px;top:379.65px;width:1.00px;height:15.83px;background:#bccbe2;"></div>
<div style="left:647.80px;top:379.65px;width:1.00px;height:15.83px;background:#bccbe2;"></div>
<div style="left:309.50px;top:410.91px;width:353.00px;height:1.00px;background:#bccbe2;"></div>
<div style="left:350.50px;top:395.48px;width:1.00px;height:15.83px;background:#bccbe2;"></div>
<div style="left:392.20px;top:395.48px;width:1.00px;height:15.83px;background:#bccbe2;"></div>
<div style="left:433.80px;top:395.48px;width:1.00px;height:15.83px;background:#bccbe2;"></div>
<div style="left:475.50px;top:395.48px;width:1.00px;height:15.83px;background:#bccbe2;"></div>
<div style="left:517.80px;top:395.48px;width:1.00px;height:15.83px;background:#bccbe2;"></div>
<div style="left:559.50px;top:395.48px;width:1.00px;height:15.83px;background:#bccbe2;"></div>
<div style="left:602.20px;top:395.48px;width:1.00px;height:15.83px;background:#bccbe2;"></div>
<div style="left:647.80px;top:395.48px;width:1.00px;height:15.83px;background:#bccbe2;"></div>
<div style="left:309.50px;top:426.74px;width:353.00px;height:1.00px;background:#d3d6e6;"></div>
<div style="left:350.50px;top:411.31px;width:1.00px;height:15.83px;background:#bccbe2;"></div>
<div style="left:392.20px;top:411.31px;width:1.00px;height:15.83px;background:#bccbe2;"></div>
<div style="left:433.80px;top:411.31px;width:1.00px;height:15.83px;background:#bccbe2;"></div>
<div style="left:475.50px;top:411.31px;width:1.00px;height:15.83px;background:#bccbe2;"></div>
<div style="left:517.80px;top:411.31px;width:1.00px;height:15.83px;background:#bccbe2;"></div>
<div style="left:559.50px;top:411.31px;width:1.00px;height:15.83px;background:#bccbe2;"></div>
<div style="left:602.20px;top:411.31px;width:1.00px;height:15.83px;background:#bccbe2;"></div>
<div style="left:647.80px;top:411.31px;width:1.00px;height:15.83px;background:#bccbe2;"></div>
<div style="left:309.50px;top:442.57px;width:353.00px;height:1.00px;background:#d3d6e6;"></div>
<div style="left:350.50px;top:427.14px;width:1.00px;height:15.83px;background:#d3d6e6;"></div>
<div style="left:392.20px;top:427.14px;width:1.00px;height:15.83px;background:#d3d6e6;"></div>
<div style="left:433.80px;top:427.14px;width:1.00px;height:15.83px;background:#d3d6e6;"></div>
<div style="left:475.50px;top:427.14px;width:1.00px;height:15.83px;background:#d3d6e6;"></div>
<div style="left:517.80px;top:427.14px;width:1.00px;height:15.83px;background:#d3d6e6;"></div>
<div style="left:559.50px;top:427.14px;width:1.00px;height:15.83px;background:#d3d6e6;"></div>
<div style="left:602.20px;top:427.14px;width:1.00px;height:15.83px;background:#d3d6e6;"></div>
<div style="left:647.80px;top:427.14px;width:1.00px;height:15.83px;background:#d3d6e6;"></div>
<div style="left:309.50px;top:458.40px;width:353.00px;height:1.00px;background:#d3d6e6;"></div>
<div style="left:350.50px;top:442.97px;width:1.00px;height:15.83px;background:#d3d6e6;"></div>
<div style="left:392.20px;top:442.97px;width:1.00px;height:15.83px;background:#d3d6e6;"></div>
<div style="left:433.80px;top:442.97px;width:1.00px;height:15.83px;background:#d3d6e6;"></div>
<div style="left:475.50px;top:442.97px;width:1.00px;height:15.83px;background:#d3d6e6;"></div>
<div style="left:517.80px;top:442.97px;width:1.00px;height:15.83px;background:#d3d6e6;"></div>
<div style="left:559.50px;top:442.97px;width:1.00px;height:15.83px;background:#d3d6e6;"></div>
<div style="left:602.20px;top:442.97px;width:1.00px;height:15.83px;background:#d3d6e6;"></div>
<div style="left:647.80px;top:442.97px;width:1.00px;height:15.83px;background:#d3d6e6;"></div>
<div style="left:309.50px;top:474.23px;width:353.00px;height:1.00px;background:#d3d6e6;"></div>
<div style="left:350.50px;top:458.80px;width:1.00px;height:15.83px;background:#d3d6e6;"></div>
<div style="left:392.20px;top:458.80px;width:1.00px;height:15.83px;background:#d3d6e6;"></div>
<div style="left:433.80px;top:458.80px;width:1.00px;height:15.83px;background:#d3d6e6;"></div>
<div style="left:475.50px;top:458.80px;width:1.00px;height:15.83px;background:#d3d6e6;"></div>
<div style="left:517.80px;top:458.80px;width:1.00px;height:15.83px;background:#d3d6e6;"></div>
<div style="left:559.50px;top:458.80px;width:1.00px;height:15.83px;background:#d3d6e6;"></div>
<div style="left:602.20px;top:458.80px;width:1.00px;height:15.83px;background:#d3d6e6;"></div>
<div style="left:647.80px;top:458.80px;width:1.00px;height:15.83px;background:#d3d6e6;"></div>
<div style="left:309.50px;top:490.06px;width:353.00px;height:1.00px;background:#d3d6e6;"></div>
<div style="left:350.50px;top:474.63px;width:1.00px;height:15.83px;background:#d3d6e6;"></div>
<div style="left:392.20px;top:474.63px;width:1.00px;height:15.83px;background:#d3d6e6;"></div>
<div style="left:433.80px;top:474.63px;width:1.00px;height:15.83px;background:#d3d6e6;"></div>
<div style="left:475.50px;top:474.63px;width:1.00px;height:15.83px;background:#d3d6e6;"></div>
<div style="left:517.80px;top:474.63px;width:1.00px;height:15.83px;background:#d3d6e6;"></div>
<div style="left:559.50px;top:474.63px;width:1.00px;height:15.83px;background:#d3d6e6;"></div>
<div style="left:602.20px;top:474.63px;width:1.00px;height:15.83px;background:#d3d6e6;"></div>
<div style="left:647.80px;top:474.63px;width:1.00px;height:15.83px;background:#d3d6e6;"></div>
<div style="left:309.50px;top:505.89px;width:353.00px;height:1.00px;background:#d3d6e6;"></div>
<div style="left:350.50px;top:490.46px;width:1.00px;height:15.83px;background:#d3d6e6;"></div>
<div style="left:392.20px;top:490.46px;width:1.00px;height:15.83px;background:#d3d6e6;"></div>
<div style="left:433.80px;top:490.46px;width:1.00px;height:15.83px;background:#d3d6e6;"></div>
<div style="left:475.50px;top:490.46px;width:1.00px;height:15.83px;background:#d3d6e6;"></div>
<div style="left:517.80px;top:490.46px;width:1.00px;height:15.83px;background:#d3d6e6;"></div>
<div style="left:559.50px;top:490.46px;width:1.00px;height:15.83px;background:#d3d6e6;"></div>
<div style="left:602.20px;top:490.46px;width:1.00px;height:15.83px;background:#d3d6e6;"></div>
<div style="left:647.80px;top:490.46px;width:1.00px;height:15.83px;background:#d3d6e6;"></div>
<div style="left:309.50px;top:521.72px;width:353.00px;height:1.00px;background:#d3d6e6;"></div>
<div style="left:350.50px;top:506.29px;width:1.00px;height:15.83px;background:#d3d6e6;"></div>
<div style="left:392.20px;top:506.29px;width:1.00px;height:15.83px;background:#d3d6e6;"></div>
<div style="left:433.80px;top:506.29px;width:1.00px;height:15.83px;background:#d3d6e6;"></div>
<div style="left:475.50px;top:506.29px;width:1.00px;height:15.83px;background:#d3d6e6;"></div>
<div style="left:517.80px;top:506.29px;width:1.00px;height:15.83px;background:#d3d6e6;"></div>
<div style="left:559.50px;top:506.29px;width:1.00px;height:15.83px;background:#d3d6e6;"></div>
<div style="left:602.20px;top:506.29px;width:1.00px;height:15.83px;background:#d3d6e6;"></div>
<div style="left:647.80px;top:506.29px;width:1.00px;height:15.83px;background:#d3d6e6;"></div>
<div style="left:309.50px;top:537.55px;width:353.00px;height:1.00px;background:#d3d6e6;"></div>
<div style="left:350.50px;top:522.12px;width:1.00px;height:15.83px;background:#d3d6e6;"></div>
<div style="left:392.20px;top:522.12px;width:1.00px;height:15.83px;background:#d3d6e6;"></div>
<div style="left:433.80px;top:522.12px;width:1.00px;height:15.83px;background:#d3d6e6;"></div>
<div style="left:475.50px;top:522.12px;width:1.00px;height:15.83px;background:#d3d6e6;"></div>
<div style="left:517.80px;top:522.12px;width:1.00px;height:15.83px;background:#d3d6e6;"></div>
<div style="left:559.50px;top:522.12px;width:1.00px;height:15.83px;background:#d3d6e6;"></div>
<div style="left:602.20px;top:522.12px;width:1.00px;height:15.83px;background:#d3d6e6;"></div>
<div style="left:647.80px;top:522.12px;width:1.00px;height:15.83px;background:#d3d6e6;"></div>
<div style="left:309.50px;top:553.38px;width:353.00px;height:1.00px;background:#d3d6e6;"></div>
<div style="left:350.50px;top:537.95px;width:1.00px;height:15.83px;background:#d3d6e6;"></div>
<div style="left:392.20px;top:537.95px;width:1.00px;height:15.83px;background:#d3d6e6;"></div>
<div style="left:433.80px;top:537.95px;width:1.00px;height:15.83px;background:#d3d6e6;"></div>
<div style="left:475.50px;top:537.95px;width:1.00px;height:15.83px;background:#d3d6e6;"></div>
<div style="left:517.80px;top:537.95px;width:1.00px;height:15.83px;background:#d3d6e6;"></div>
<div style="left:559.50px;top:537.95px;width:1.00px;height:15.83px;background:#d3d6e6;"></div>
<div style="left:602.20px;top:537.95px;width:1.00px;height:15.83px;background:#d3d6e6;"></div>
<div style="left:647.80px;top:537.95px;width:1.00px;height:15.83px;background:#d3d6e6;"></div>
<div style="left:309.50px;top:569.21px;width:353.00px;height:1.00px;background:#d3d6e6;"></div>
<div style="left:350.50px;top:553.78px;width:1.00px;height:15.83px;background:#d3d6e6;"></div>
<div style="left:392.20px;top:553.78px;width:1.00px;height:15.83px;background:#d3d6e6;"></div>
<div style="left:433.80px;top:553.78px;width:1.00px;height:15.83px;background:#d3d6e6;"></div>
<div style="left:475.50px;top:553.78px;width:1.00px;height:15.83px;background:#d3d6e6;"></div>
<div style="left:517.80px;top:553.78px;width:1.00px;height:15.83px;background:#d3d6e6;"></div>
<div style="left:559.50px;top:553.78px;width:1.00px;height:15.83px;background:#d3d6e6;"></div>
<div style="left:602.20px;top:553.78px;width:1.00px;height:15.83px;background:#d3d6e6;"></div>
<div style="left:647.80px;top:553.78px;width:1.00px;height:15.83px;background:#d3d6e6;"></div>
<div style="left:309.50px;top:585.04px;width:353.00px;height:1.00px;background:#d3d6e6;"></div>
<div style="left:350.50px;top:569.61px;width:1.00px;height:15.83px;background:#d3d6e6;"></div>
<div style="left:392.20px;top:569.61px;width:1.00px;height:15.83px;background:#d3d6e6;"></div>
<div style="left:433.80px;top:569.61px;width:1.00px;height:15.83px;background:#d3d6e6;"></div>
<div style="left:475.50px;top:569.61px;width:1.00px;height:15.83px;background:#d3d6e6;"></div>
<div style="left:517.80px;top:569.61px;width:1.00px;height:15.83px;background:#d3d6e6;"></div>
<div style="left:559.50px;top:569.61px;width:1.00px;height:15.83px;background:#d3d6e6;"></div>
<div style="left:602.20px;top:569.61px;width:1.00px;height:15.83px;background:#d3d6e6;"></div>
<div style="left:647.80px;top:569.61px;width:1.00px;height:15.83px;background:#d3d6e6;"></div>
<div style="left:350.50px;top:585.44px;width:1.00px;height:7.86px;background:#d3d6e6;"></div>
<div style="left:392.20px;top:585.44px;width:1.00px;height:7.86px;background:#d3d6e6;"></div>
<div style="left:433.80px;top:585.44px;width:1.00px;height:7.86px;background:#d3d6e6;"></div>
<div style="left:475.50px;top:585.44px;width:1.00px;height:7.86px;background:#d3d6e6;"></div>
<div style="left:517.80px;top:585.44px;width:1.00px;height:7.86px;background:#d3d6e6;"></div>
<div style="left:559.50px;top:585.44px;width:1.00px;height:7.86px;background:#d3d6e6;"></div>
<div style="left:602.20px;top:585.44px;width:1.00px;height:7.86px;background:#d3d6e6;"></div>
<div style="left:647.80px;top:585.44px;width:1.00px;height:7.86px;background:#d3d6e6;"></div>
<div style="left:309.50px;top:300.50px;width:353.00px;height:292.80px;overflow:hidden">
<div style="left:-2.20px;width:41.50px;text-align:right;overflow:hidden;top:2.21px;height:14px;line-height:14px;font-size:10px;color:#e8202a;font-weight:normal;white-space:pre;">81.50</div>
<div style="left:39.30px;width:41.70px;text-align:right;overflow:hidden;top:2.21px;height:14px;line-height:14px;font-size:10px;color:#1c1c24;font-weight:normal;white-space:pre;">-31.52</div>
<div style="left:81.00px;width:41.60px;text-align:right;overflow:hidden;top:2.21px;height:14px;line-height:14px;font-size:10px;color:#1c1c24;font-weight:normal;white-space:pre;">-1.03</div>
<div style="left:122.60px;width:41.70px;text-align:right;overflow:hidden;top:2.21px;height:14px;line-height:14px;font-size:10px;color:#1c1c24;font-weight:normal;white-space:pre;">782.25</div>
<div style="left:-2.20px;width:41.50px;text-align:right;overflow:hidden;top:18.05px;height:14px;line-height:14px;font-size:10px;color:#1f9030;font-weight:normal;white-space:pre;">75.50</div>
<div style="left:39.30px;width:41.70px;text-align:right;overflow:hidden;top:18.05px;height:14px;line-height:14px;font-size:10px;color:#1c1c24;font-weight:normal;white-space:pre;">-29.44</div>
<div style="left:81.00px;width:41.60px;text-align:right;overflow:hidden;top:18.05px;height:14px;line-height:14px;font-size:10px;color:#1c1c24;font-weight:normal;white-space:pre;">-1.03</div>
<div style="left:122.60px;width:41.70px;text-align:right;overflow:hidden;top:18.05px;height:14px;line-height:14px;font-size:10px;color:#1c1c24;font-weight:normal;white-space:pre;">758.97</div>
<div style="left:-2.20px;width:41.50px;text-align:right;overflow:hidden;top:33.88px;height:14px;line-height:14px;font-size:10px;color:#e8202a;font-weight:normal;white-space:pre;">70.00</div>
<div style="left:39.30px;width:41.70px;text-align:right;overflow:hidden;top:33.88px;height:14px;line-height:14px;font-size:10px;color:#1c1c24;font-weight:normal;white-space:pre;">-27.51</div>
<div style="left:81.00px;width:41.60px;text-align:right;overflow:hidden;top:33.88px;height:14px;line-height:14px;font-size:10px;color:#1c1c24;font-weight:normal;white-space:pre;">-1.03</div>
<div style="left:122.60px;width:41.70px;text-align:right;overflow:hidden;top:33.88px;height:14px;line-height:14px;font-size:10px;color:#1c1c24;font-weight:normal;white-space:pre;">734.72</div>
<div style="left:164.30px;width:42.30px;text-align:right;overflow:hidden;top:33.88px;height:14px;line-height:14px;font-size:10px;color:#1c1c24;font-weight:normal;white-space:pre;">69.75</div>
<div style="left:206.60px;width:41.70px;text-align:right;overflow:hidden;top:33.88px;height:14px;line-height:14px;font-size:10px;color:#1c1c24;font-weight:normal;white-space:pre;">0.02</div>
<div style="left:291.00px;width:45.60px;text-align:right;overflow:hidden;top:33.88px;height:14px;line-height:14px;font-size:10px;color:#1c1c24;font-weight:normal;white-space:pre;">+2</div>
<div style="left:-2.20px;width:41.50px;text-align:right;overflow:hidden;top:49.70px;height:14px;line-height:14px;font-size:10px;color:#1f9030;font-weight:normal;white-space:pre;">65.00</div>
<div style="left:39.30px;width:41.70px;text-align:right;overflow:hidden;top:49.70px;height:14px;line-height:14px;font-size:10px;color:#1c1c24;font-weight:normal;white-space:pre;">-25.70</div>
<div style="left:81.00px;width:41.60px;text-align:right;overflow:hidden;top:49.70px;height:14px;line-height:14px;font-size:10px;color:#1c1c24;font-weight:normal;white-space:pre;">-1.02</div>
<div style="left:122.60px;width:41.70px;text-align:right;overflow:hidden;top:49.70px;height:14px;line-height:14px;font-size:10px;color:#1c1c24;font-weight:normal;white-space:pre;">709.83</div>
<div style="left:-2.20px;width:41.50px;text-align:right;overflow:hidden;top:65.53px;height:14px;line-height:14px;font-size:10px;color:#e8202a;font-weight:normal;white-space:pre;">60.25</div>
<div style="left:39.30px;width:41.70px;text-align:right;overflow:hidden;top:65.53px;height:14px;line-height:14px;font-size:10px;color:#1c1c24;font-weight:normal;white-space:pre;">-23.98</div>
<div style="left:81.00px;width:41.60px;text-align:right;overflow:hidden;top:65.53px;height:14px;line-height:14px;font-size:10px;color:#1c1c24;font-weight:normal;white-space:pre;">-1.01</div>
<div style="left:122.60px;width:41.70px;text-align:right;overflow:hidden;top:65.53px;height:14px;line-height:14px;font-size:10px;color:#1c1c24;font-weight:normal;white-space:pre;">684.13</div>
<div style="left:164.30px;width:42.30px;text-align:right;overflow:hidden;top:65.53px;height:14px;line-height:14px;font-size:10px;color:#1c1c24;font-weight:normal;white-space:pre;">60.25</div>
<div style="left:206.60px;width:41.70px;text-align:right;overflow:hidden;top:65.53px;height:14px;line-height:14px;font-size:10px;color:#1c1c24;font-weight:normal;white-space:pre;">-0.02</div>
<div style="left:291.00px;width:45.60px;text-align:right;overflow:hidden;top:65.53px;height:14px;line-height:14px;font-size:10px;color:#1c1c24;font-weight:normal;white-space:pre;">-4</div>
<div style="left:-2.20px;width:41.50px;text-align:right;overflow:hidden;top:81.37px;height:14px;line-height:14px;font-size:10px;color:#e8202a;font-weight:normal;white-space:pre;">56.00</div>
<div style="left:39.30px;width:41.70px;text-align:right;overflow:hidden;top:81.37px;height:14px;line-height:14px;font-size:10px;color:#1c1c24;font-weight:normal;white-space:pre;">-22.40</div>
<div style="left:81.00px;width:41.60px;text-align:right;overflow:hidden;top:81.37px;height:14px;line-height:14px;font-size:10px;color:#1c1c24;font-weight:normal;white-space:pre;">-1.00</div>
<div style="left:122.60px;width:41.70px;text-align:right;overflow:hidden;top:81.37px;height:14px;line-height:14px;font-size:10px;color:#1c1c24;font-weight:normal;white-space:pre;">658.61</div>
<div style="left:-2.20px;width:41.50px;text-align:right;overflow:hidden;top:97.20px;height:14px;line-height:14px;font-size:10px;color:#1f9030;font-weight:normal;white-space:pre;">52.25</div>
<div style="left:39.30px;width:41.70px;text-align:right;overflow:hidden;top:97.20px;height:14px;line-height:14px;font-size:10px;color:#1c1c24;font-weight:normal;white-space:pre;">-20.93</div>
<div style="left:81.00px;width:41.60px;text-align:right;overflow:hidden;top:97.20px;height:14px;line-height:14px;font-size:10px;color:#1c1c24;font-weight:normal;white-space:pre;">-0.98</div>
<div style="left:122.60px;width:41.70px;text-align:right;overflow:hidden;top:97.20px;height:14px;line-height:14px;font-size:10px;color:#1c1c24;font-weight:normal;white-space:pre;">633.37</div>
<div style="left:164.30px;width:42.30px;text-align:right;overflow:hidden;top:97.20px;height:14px;line-height:14px;font-size:10px;color:#1c1c24;font-weight:normal;white-space:pre;">52.00</div>
<div style="left:206.60px;width:41.70px;text-align:right;overflow:hidden;top:97.20px;height:14px;line-height:14px;font-size:10px;color:#1c1c24;font-weight:normal;white-space:pre;">0.02</div>
<div style="left:291.00px;width:45.60px;text-align:right;overflow:hidden;top:97.20px;height:14px;line-height:14px;font-size:10px;color:#1c1c24;font-weight:normal;white-space:pre;">-2</div>
<div style="left:-2.20px;width:41.50px;text-align:right;overflow:hidden;top:113.03px;height:14px;line-height:14px;font-size:10px;color:#e8202a;font-weight:normal;white-space:pre;">48.50</div>
<div style="left:39.30px;width:41.70px;text-align:right;overflow:hidden;top:113.03px;height:14px;line-height:14px;font-size:10px;color:#1c1c24;font-weight:normal;white-space:pre;">-19.53</div>
<div style="left:81.00px;width:41.60px;text-align:right;overflow:hidden;top:113.03px;height:14px;line-height:14px;font-size:10px;color:#1c1c24;font-weight:normal;white-space:pre;">-0.96</div>
<div style="left:122.60px;width:41.70px;text-align:right;overflow:hidden;top:113.03px;height:14px;line-height:14px;font-size:10px;color:#1c1c24;font-weight:normal;white-space:pre;">607.59</div>
<div style="left:-2.20px;width:41.50px;text-align:right;overflow:hidden;top:128.86px;height:14px;line-height:14px;font-size:10px;color:#1c1c24;font-weight:normal;white-space:pre;">45.25</div>
<div style="left:39.30px;width:41.70px;text-align:right;overflow:hidden;top:128.86px;height:14px;line-height:14px;font-size:10px;color:#1c1c24;font-weight:normal;white-space:pre;">-18.25</div>
<div style="left:81.00px;width:41.60px;text-align:right;overflow:hidden;top:128.86px;height:14px;line-height:14px;font-size:10px;color:#1c1c24;font-weight:normal;white-space:pre;">-0.95</div>
<div style="left:122.60px;width:41.70px;text-align:right;overflow:hidden;top:128.86px;height:14px;line-height:14px;font-size:10px;color:#1c1c24;font-weight:normal;white-space:pre;">582.67</div>
<div style="left:-2.20px;width:41.50px;text-align:right;overflow:hidden;top:144.69px;height:14px;line-height:14px;font-size:10px;color:#1c1c24;font-weight:normal;white-space:pre;">42.25</div>
<div style="left:39.30px;width:41.70px;text-align:right;overflow:hidden;top:144.69px;height:14px;line-height:14px;font-size:10px;color:#1c1c24;font-weight:normal;white-space:pre;">-17.06</div>
<div style="left:81.00px;width:41.60px;text-align:right;overflow:hidden;top:144.69px;height:14px;line-height:14px;font-size:10px;color:#1c1c24;font-weight:normal;white-space:pre;">-0.93</div>
<div style="left:122.60px;width:41.70px;text-align:right;overflow:hidden;top:144.69px;height:14px;line-height:14px;font-size:10px;color:#1c1c24;font-weight:normal;white-space:pre;">558.32</div>
<div style="left:164.30px;width:42.30px;text-align:right;overflow:hidden;top:144.69px;height:14px;line-height:14px;font-size:10px;color:#1c1c24;font-weight:normal;white-space:pre;">42.25</div>
<div style="left:206.60px;width:41.70px;text-align:right;overflow:hidden;top:144.69px;height:14px;line-height:14px;font-size:10px;color:#1c1c24;font-weight:normal;white-space:pre;">-0.02</div>
<div style="left:291.00px;width:45.60px;text-align:right;overflow:hidden;top:144.69px;height:14px;line-height:14px;font-size:10px;color:#1c1c24;font-weight:normal;white-space:pre;">+2</div>
<div style="left:-2.20px;width:41.50px;text-align:right;overflow:hidden;top:160.52px;height:14px;line-height:14px;font-size:10px;color:#1f9030;font-weight:normal;white-space:pre;">39.50</div>
<div style="left:39.30px;width:41.70px;text-align:right;overflow:hidden;top:160.52px;height:14px;line-height:14px;font-size:10px;color:#1c1c24;font-weight:normal;white-space:pre;">-15.95</div>
<div style="left:81.00px;width:41.60px;text-align:right;overflow:hidden;top:160.52px;height:14px;line-height:14px;font-size:10px;color:#1c1c24;font-weight:normal;white-space:pre;">-0.91</div>
<div style="left:122.60px;width:41.70px;text-align:right;overflow:hidden;top:160.52px;height:14px;line-height:14px;font-size:10px;color:#1c1c24;font-weight:normal;white-space:pre;">534.64</div>
<div style="left:-2.20px;width:41.50px;text-align:right;overflow:hidden;top:176.35px;height:14px;line-height:14px;font-size:10px;color:#1f9030;font-weight:normal;white-space:pre;">37.00</div>
<div style="left:39.30px;width:41.70px;text-align:right;overflow:hidden;top:176.35px;height:14px;line-height:14px;font-size:10px;color:#1c1c24;font-weight:normal;white-space:pre;">-14.94</div>
<div style="left:81.00px;width:41.60px;text-align:right;overflow:hidden;top:176.35px;height:14px;line-height:14px;font-size:10px;color:#1c1c24;font-weight:normal;white-space:pre;">-0.89</div>
<div style="left:122.60px;width:41.70px;text-align:right;overflow:hidden;top:176.35px;height:14px;line-height:14px;font-size:10px;color:#1c1c24;font-weight:normal;white-space:pre;">511.90</div>
<div style="left:-2.20px;width:41.50px;text-align:right;overflow:hidden;top:192.18px;height:14px;line-height:14px;font-size:10px;color:#1c1c24;font-weight:normal;white-space:pre;">34.50</div>
<div style="left:39.30px;width:41.70px;text-align:right;overflow:hidden;top:192.18px;height:14px;line-height:14px;font-size:10px;color:#1c1c24;font-weight:normal;white-space:pre;">-13.95</div>
<div style="left:81.00px;width:41.60px;text-align:right;overflow:hidden;top:192.18px;height:14px;line-height:14px;font-size:10px;color:#1c1c24;font-weight:normal;white-space:pre;">-0.87</div>
<div style="left:122.60px;width:41.70px;text-align:right;overflow:hidden;top:192.18px;height:14px;line-height:14px;font-size:10px;color:#1c1c24;font-weight:normal;white-space:pre;">488.73</div>
<div style="left:-2.20px;width:41.50px;text-align:right;overflow:hidden;top:208.01px;height:14px;line-height:14px;font-size:10px;color:#1c1c24;font-weight:normal;white-space:pre;">32.25</div>
<div style="left:39.30px;width:41.70px;text-align:right;overflow:hidden;top:208.01px;height:14px;line-height:14px;font-size:10px;color:#1c1c24;font-weight:normal;white-space:pre;">-13.05</div>
<div style="left:81.00px;width:41.60px;text-align:right;overflow:hidden;top:208.01px;height:14px;line-height:14px;font-size:10px;color:#1c1c24;font-weight:normal;white-space:pre;">-0.84</div>
<div style="left:122.60px;width:41.70px;text-align:right;overflow:hidden;top:208.01px;height:14px;line-height:14px;font-size:10px;color:#1c1c24;font-weight:normal;white-space:pre;">466.94</div>
<div style="left:-2.20px;width:41.50px;text-align:right;overflow:hidden;top:223.84px;height:14px;line-height:14px;font-size:10px;color:#1c1c24;font-weight:normal;white-space:pre;">30.25</div>
<div style="left:39.30px;width:41.70px;text-align:right;overflow:hidden;top:223.84px;height:14px;line-height:14px;font-size:10px;color:#1c1c24;font-weight:normal;white-space:pre;">-12.21</div>
<div style="left:81.00px;width:41.60px;text-align:right;overflow:hidden;top:223.84px;height:14px;line-height:14px;font-size:10px;color:#1c1c24;font-weight:normal;white-space:pre;">-0.82</div>
<div style="left:122.60px;width:41.70px;text-align:right;overflow:hidden;top:223.84px;height:14px;line-height:14px;font-size:10px;color:#1c1c24;font-weight:normal;white-space:pre;">445.90</div>
<div style="left:-2.20px;width:41.50px;text-align:right;overflow:hidden;top:239.67px;height:14px;line-height:14px;font-size:10px;color:#e8202a;font-weight:normal;white-space:pre;">28.375</div>
<div style="left:39.30px;width:41.70px;text-align:right;overflow:hidden;top:239.67px;height:14px;line-height:14px;font-size:10px;color:#1c1c24;font-weight:normal;white-space:pre;">-11.44</div>
<div style="left:81.00px;width:41.60px;text-align:right;overflow:hidden;top:239.67px;height:14px;line-height:14px;font-size:10px;color:#1c1c24;font-weight:normal;white-space:pre;">-0.80</div>
<div style="left:122.60px;width:41.70px;text-align:right;overflow:hidden;top:239.67px;height:14px;line-height:14px;font-size:10px;color:#1c1c24;font-weight:normal;white-space:pre;">425.83</div>
<div style="left:-2.20px;width:41.50px;text-align:right;overflow:hidden;top:255.50px;height:14px;line-height:14px;font-size:10px;color:#1f9030;font-weight:normal;white-space:pre;">26.75</div>
<div style="left:39.30px;width:41.70px;text-align:right;overflow:hidden;top:255.50px;height:14px;line-height:14px;font-size:10px;color:#1c1c24;font-weight:normal;white-space:pre;">-10.75</div>
<div style="left:81.00px;width:41.60px;text-align:right;overflow:hidden;top:255.50px;height:14px;line-height:14px;font-size:10px;color:#1c1c24;font-weight:normal;white-space:pre;">-0.78</div>
<div style="left:122.60px;width:41.70px;text-align:right;overflow:hidden;top:255.50px;height:14px;line-height:14px;font-size:10px;color:#1c1c24;font-weight:normal;white-space:pre;">407.19</div>
<div style="left:-2.20px;width:41.50px;text-align:right;overflow:hidden;top:271.33px;height:14px;line-height:14px;font-size:10px;color:#1c1c24;font-weight:normal;white-space:pre;">25.00</div>
<div style="left:39.30px;width:41.70px;text-align:right;overflow:hidden;top:271.33px;height:14px;line-height:14px;font-size:10px;color:#1c1c24;font-weight:normal;white-space:pre;">-10.05</div>
<div style="left:81.00px;width:41.60px;text-align:right;overflow:hidden;top:271.33px;height:14px;line-height:14px;font-size:10px;color:#1c1c24;font-weight:normal;white-space:pre;">-0.76</div>
<div style="left:122.60px;width:41.70px;text-align:right;overflow:hidden;top:271.33px;height:14px;line-height:14px;font-size:10px;color:#1c1c24;font-weight:normal;white-space:pre;">387.68</div>
<div style="left:-2.20px;width:41.50px;text-align:right;overflow:hidden;top:287.16px;height:14px;line-height:14px;font-size:10px;color:#1c1c24;font-weight:normal;white-space:pre;">23.50</div>
<div style="left:39.30px;width:41.70px;text-align:right;overflow:hidden;top:287.16px;height:14px;line-height:14px;font-size:10px;color:#1c1c24;font-weight:normal;white-space:pre;">-9.42</div>
<div style="left:81.00px;width:41.60px;text-align:right;overflow:hidden;top:287.16px;height:14px;line-height:14px;font-size:10px;color:#1c1c24;font-weight:normal;white-space:pre;">-0.74</div>
<div style="left:122.60px;width:41.70px;text-align:right;overflow:hidden;top:287.16px;height:14px;line-height:14px;font-size:10px;color:#1c1c24;font-weight:normal;white-space:pre;">370.04</div>
</div>
<div style="left:648.30px;top:300.50px;width:14.70px;height:292.80px;background:#d3d9e5;"></div>
<svg style="left:650px;top:301px;width:11px;height:292px" viewBox="0 0 11 292"><path d="M2 9 L5.5 5.5 L9 9Z M2 283 L5.5 286.5 L9 283Z" fill="#6a7080"/></svg>
<div style="left:650.80px;top:406.00px;width:9.30px;height:24.80px;background:#9aa5b5;"></div>
<div style="left:-2.00px;top:282.00px;width:308.00px;height:312.00px;background:transparent;border:1px solid #aab5ca;box-sizing:border-box;"></div>
<div style="left:308.50px;top:282.00px;width:355.00px;height:312.00px;background:transparent;border:1px solid #aab5ca;box-sizing:border-box;"></div>
<div style="left:0.00px;top:605.00px;width:663.00px;height:70.00px;background:#d1d7e5;"></div>
<div style="left:-2.00px;top:606.30px;width:101.00px;height:16.20px;background:#ffffff;border:1px solid #b4bdd0;box-sizing:border-box;"></div>
<div style="left:-1.00px;top:608.20px;height:14px;line-height:14px;font-size:10px;color:#1c1c24;font-weight:normal;white-space:pre;">ined</div>
<svg style="left:89px;top:612px;width:6px;height:4px" viewBox="0 0 6 4"><path d="M0 0.5h6L3 3.5Z" fill="#505868"/></svg>
<div style="left:107.00px;top:606.30px;width:68.00px;height:16.20px;background:#ffffff;border:1px solid #b4bdd0;box-sizing:border-box;"></div>
<div style="left:110.00px;top:608.20px;height:14px;line-height:14px;font-size:10px;color:#1c1c24;font-weight:normal;white-space:pre;">Auto</div>
<svg style="left:165px;top:612px;width:6px;height:4px" viewBox="0 0 6 4"><path d="M0 0.5h6L3 3.5Z" fill="#505868"/></svg>
<div style="left:544.50px;top:609.50px;width:9.00px;height:8.50px;background:#ffffff;border:1px solid #9ca4b4;box-sizing:border-box;"></div>
<div style="left:557.00px;top:607.90px;height:14px;line-height:14px;font-size:10.55px;color:#2b2b3c;font-weight:normal;white-space:pre;">Ignore Today's Trades</div>
<div style="left:-20.00px;top:625.50px;width:682.70px;height:18.00px;background:#f5f7fb;"></div>
<div style="left:-20.00px;top:643.50px;width:682.70px;height:50.00px;background:#ffffff;"></div>
<div style="left:12.00px;width:59.50px;text-align:center;overflow:hidden;top:627.50px;height:14px;line-height:14px;font-size:10px;color:#3a3c4c;font-weight:normal;white-space:pre;">Cost</div>
<div style="left:71.50px;width:58.50px;text-align:center;overflow:hidden;top:627.50px;height:14px;line-height:14px;font-size:10px;color:#3a3c4c;font-weight:normal;white-space:pre;">Curr Cost</div>
<div style="left:130.00px;width:59.50px;text-align:center;overflow:hidden;top:627.50px;height:14px;line-height:14px;font-size:10px;color:#3a3c4c;font-weight:normal;white-space:pre;">Commissi...</div>
<div style="left:189.50px;width:59.20px;text-align:center;overflow:hidden;top:627.50px;height:14px;line-height:14px;font-size:10px;color:#3a3c4c;font-weight:normal;white-space:pre;">PnL</div>
<div style="left:248.70px;width:58.90px;text-align:center;overflow:hidden;top:627.50px;height:14px;line-height:14px;font-size:10px;color:#3a3c4c;font-weight:normal;white-space:pre;">PnL%</div>
<div style="left:307.60px;width:59.10px;text-align:center;overflow:hidden;top:627.50px;height:14px;line-height:14px;font-size:10px;color:#3a3c4c;font-weight:normal;white-space:pre;">Delta</div>
<div style="left:366.70px;width:59.30px;text-align:center;overflow:hidden;top:627.50px;height:14px;line-height:14px;font-size:10px;color:#3a3c4c;font-weight:normal;white-space:pre;">Gamma</div>
<div style="left:426.00px;width:59.00px;text-align:center;overflow:hidden;top:627.50px;height:14px;line-height:14px;font-size:10px;color:#3a3c4c;font-weight:normal;white-space:pre;">Theta</div>
<div style="left:485.00px;width:59.30px;text-align:center;overflow:hidden;top:627.50px;height:14px;line-height:14px;font-size:10px;color:#3a3c4c;font-weight:normal;white-space:pre;">Vega</div>
<div style="left:544.30px;width:59.00px;text-align:center;overflow:hidden;top:627.50px;height:14px;line-height:14px;font-size:10px;color:#3a3c4c;font-weight:normal;white-space:pre;">T/D</div>
<div style="left:603.30px;width:59.40px;text-align:center;overflow:hidden;top:627.50px;height:14px;line-height:14px;font-size:10px;color:#3a3c4c;font-weight:normal;white-space:pre;">Plot</div>
<div style="left:11.50px;top:625.50px;width:1.00px;height:60.00px;background:#dde2ec;"></div>
<div style="left:71.00px;top:625.50px;width:1.00px;height:60.00px;background:#dde2ec;"></div>
<div style="left:129.50px;top:625.50px;width:1.00px;height:60.00px;background:#dde2ec;"></div>
<div style="left:189.00px;top:625.50px;width:1.00px;height:60.00px;background:#dde2ec;"></div>
<div style="left:248.20px;top:625.50px;width:1.00px;height:60.00px;background:#dde2ec;"></div>
<div style="left:307.10px;top:625.50px;width:1.00px;height:60.00px;background:#dde2ec;"></div>
<div style="left:366.20px;top:625.50px;width:1.00px;height:60.00px;background:#dde2ec;"></div>
<div style="left:425.50px;top:625.50px;width:1.00px;height:60.00px;background:#dde2ec;"></div>
<div style="left:484.50px;top:625.50px;width:1.00px;height:60.00px;background:#dde2ec;"></div>
<div style="left:543.80px;top:625.50px;width:1.00px;height:60.00px;background:#dde2ec;"></div>
<div style="left:602.80px;top:625.50px;width:1.00px;height:60.00px;background:#dde2ec;"></div>
<div style="left:662.20px;top:625.50px;width:1.00px;height:60.00px;background:#dde2ec;"></div>
<div style="left:-20.00px;top:643.00px;width:682.70px;height:1.00px;background:#dde2ec;"></div>
<div style="left:-20.00px;top:658.80px;width:682.70px;height:1.00px;background:#e2e6ee;"></div>
<div style="left:-50.50px;width:60.00px;text-align:right;overflow:hidden;top:645.90px;height:14px;line-height:14px;font-size:10px;color:#1c1c24;font-weight:normal;white-space:pre;">20</div>
<div style="left:9.00px;width:60.00px;text-align:right;overflow:hidden;top:645.90px;height:14px;line-height:14px;font-size:10px;color:#1c1c24;font-weight:normal;white-space:pre;">-585.20</div>
<div style="left:67.50px;width:60.00px;text-align:right;overflow:hidden;top:645.90px;height:14px;line-height:14px;font-size:10px;color:#1c1c24;font-weight:normal;white-space:pre;">587.50</div>
<div style="left:127.00px;width:60.00px;text-align:right;overflow:hidden;top:645.90px;height:14px;line-height:14px;font-size:10px;color:#1c1c24;font-weight:normal;white-space:pre;">10.20</div>
<div style="left:186.20px;width:60.00px;text-align:right;overflow:hidden;top:645.90px;height:14px;line-height:14px;font-size:10px;color:#1f9030;font-weight:normal;white-space:pre;">2.30</div>
<div style="left:245.10px;width:60.00px;text-align:right;overflow:hidden;top:645.90px;height:14px;line-height:14px;font-size:10px;color:#1f9030;font-weight:normal;white-space:pre;">0.01%</div>
<div style="left:304.20px;width:60.00px;text-align:right;overflow:hidden;top:645.90px;height:14px;line-height:14px;font-size:10px;color:#1c1c24;font-weight:normal;white-space:pre;">3.42</div>
<div style="left:363.50px;width:60.00px;text-align:right;overflow:hidden;top:645.90px;height:14px;line-height:14px;font-size:10px;color:#1c1c24;font-weight:normal;white-space:pre;">-0.02</div>
<div style="left:422.50px;width:60.00px;text-align:right;overflow:hidden;top:645.90px;height:14px;line-height:14px;font-size:10px;color:#1c1c24;font-weight:normal;white-space:pre;">34.25</div>
<div style="left:481.80px;width:60.00px;text-align:right;overflow:hidden;top:645.90px;height:14px;line-height:14px;font-size:10px;color:#1c1c24;font-weight:normal;white-space:pre;">107.18</div>
<div style="left:540.80px;width:60.00px;text-align:right;overflow:hidden;top:645.90px;height:14px;line-height:14px;font-size:10px;color:#1c1c24;font-weight:normal;white-space:pre;">10</div>
<svg style="left:628px;top:646.5px;width:10px;height:10px" viewBox="0 0 10 10"><rect x="0.5" y="0.5" width="9" height="9" fill="#fff" stroke="#8a92a4"/><path d="M2 5 L4 7.3 L8 2.5" fill="none" stroke="#404858" stroke-width="1"/></svg>
<div style="left:304.20px;width:60.00px;text-align:right;overflow:hidden;top:661.70px;height:14px;line-height:14px;font-size:10px;color:#1c1c24;font-weight:normal;white-space:pre;">0.00</div>
<div style="left:363.50px;width:60.00px;text-align:right;overflow:hidden;top:661.70px;height:14px;line-height:14px;font-size:10px;color:#1c1c24;font-weight:normal;white-space:pre;">0.00</div>
<div style="left:422.50px;width:60.00px;text-align:right;overflow:hidden;top:661.70px;height:14px;line-height:14px;font-size:10px;color:#1c1c24;font-weight:normal;white-space:pre;">0.00</div>
<div style="left:481.80px;width:60.00px;text-align:right;overflow:hidden;top:661.70px;height:14px;line-height:14px;font-size:10px;color:#1c1c24;font-weight:normal;white-space:pre;">0.00</div>
<div style="left:540.80px;width:60.00px;text-align:right;overflow:hidden;top:661.70px;height:14px;line-height:14px;font-size:10px;color:#1c1c24;font-weight:normal;white-space:pre;">0</div>
<svg style="left:628px;top:662.3px;width:10px;height:10px" viewBox="0 0 10 10"><rect x="0.5" y="0.5" width="9" height="9" fill="#fff" stroke="#8a92a4"/><path d="M2 5 L4 7.3 L8 2.5" fill="none" stroke="#404858" stroke-width="1"/></svg>
<div style="left:674.00px;top:136.00px;width:406.00px;height:539.00px;background:#d6dce8;"></div>
<div style="left:674.00px;top:136.00px;width:1.00px;height:519.00px;background:#b8c2d4;"></div>
<div style="left:674.50px;top:159.50px;width:405.50px;height:1.00px;background:#b8c2d4;"></div>
<div style="left:674.50px;top:138.50px;width:63.80px;height:22.00px;background:#d9dfea;border:1px solid #aab5c9;border-bottom:none;box-sizing:border-box;"></div>
<div style="left:674.50px;width:63.80px;text-align:center;overflow:hidden;top:142.50px;height:14px;line-height:14px;font-size:10px;color:#2b2b3c;font-weight:normal;white-space:pre;">Risk Chart</div>
<div style="left:738.30px;top:138.50px;width:67.20px;height:21.00px;background:#cfd6e3;border:1px solid #aab5c9;border-left:none;box-sizing:border-box;"></div>
<div style="left:738.30px;width:67.20px;text-align:center;overflow:hidden;top:142.50px;height:14px;line-height:14px;font-size:10px;color:#2b2b3c;font-weight:normal;white-space:pre;">Price Chart</div>
<div style="left:805.50px;top:138.50px;width:106.30px;height:21.00px;background:#cfd6e3;border:1px solid #aab5c9;border-left:none;box-sizing:border-box;"></div>
<div style="left:805.50px;width:106.30px;text-align:center;overflow:hidden;top:142.50px;height:14px;line-height:14px;font-size:10px;color:#2b2b3c;font-weight:normal;white-space:pre;">Movement Analysis</div>
<div style="left:911.80px;top:138.50px;width:54.20px;height:21.00px;background:#cfd6e3;border:1px solid #aab5c9;border-left:none;box-sizing:border-box;"></div>
<div style="left:911.80px;width:54.20px;text-align:center;overflow:hidden;top:142.50px;height:14px;line-height:14px;font-size:10px;color:#2b2b3c;font-weight:normal;white-space:pre;">Volatility</div>
<div style="left:966.00px;top:138.50px;width:134.00px;height:21.00px;background:#cfd6e3;border:1px solid #aab5c9;border-left:none;box-sizing:border-box;"></div>
<div style="left:966.00px;width:134.00px;text-align:center;overflow:hidden;top:142.50px;height:14px;line-height:14px;font-size:10px;color:#2b2b3c;font-weight:normal;white-space:pre;">Statistics & Fundamentals</div>
<div style="left:679.00px;top:164.50px;height:14px;line-height:14px;font-size:10.2px;color:#2b2b3c;font-weight:normal;white-space:pre;">Vol Adjust</div>
<div style="left:728.50px;top:163.20px;width:44.60px;height:16.00px;background:#ffffff;border:1px solid #c4ccdc;box-sizing:border-box;"></div>
<div style="left:737.00px;width:20.00px;text-align:right;overflow:hidden;top:164.50px;height:14px;line-height:14px;font-size:10px;color:#1c1c24;font-weight:normal;white-space:pre;">0</div>
<svg style="left:761px;top:164px;width:10px;height:15px" viewBox="0 0 10 15"><path d="M2.5 5.5 L5 2.5 L7.5 5.5Z M2.5 9.5 L5 12.5 L7.5 9.5Z" fill="#4a5060"/></svg>
<div style="left:988.00px;top:164.50px;height:14px;line-height:14px;font-size:9.8px;color:#2b2b3c;font-weight:normal;white-space:pre;">Projection</div>
<div style="left:1035.00px;top:163.50px;width:50.00px;height:16.00px;background:#ffffff;border:1px solid #c4ccdc;box-sizing:border-box;"></div>
<div style="left:1037.00px;top:164.50px;height:14px;line-height:14px;font-size:10px;color:#1c1c24;font-weight:normal;white-space:pre;">23/09/2024</div>
<div style="left:675.00px;top:182.00px;width:405.00px;height:473.00px;background:#ffffff;"></div>
<svg style="left:0;top:0;width:1080px;height:675px" viewBox="0 0 1080 675"><rect x="925" y="197.3" width="100" height="277" fill="#93cddc"/><rect x="949" y="197.3" width="51" height="277" fill="#4d80c0"/><path d="M719 197.30 H1080" stroke="#e2e2e2" stroke-width="1"/><path d="M719 213.64 H1080" stroke="#e2e2e2" stroke-width="1"/><path d="M719 229.98 H1080" stroke="#e2e2e2" stroke-width="1"/><path d="M719 246.32 H1080" stroke="#e2e2e2" stroke-width="1"/><path d="M719 262.66 H1080" stroke="#e2e2e2" stroke-width="1"/><path d="M719 279.00 H1080" stroke="#e2e2e2" stroke-width="1"/><path d="M719 295.34 H1080" stroke="#e2e2e2" stroke-width="1"/><path d="M719 311.68 H1080" stroke="#e2e2e2" stroke-width="1"/><path d="M719 328.02 H1080" stroke="#e2e2e2" stroke-width="1"/><path d="M719 344.36 H1080" stroke="#e2e2e2" stroke-width="1"/><path d="M719 360.70 H1080" stroke="#e2e2e2" stroke-width="1"/><path d="M719 377.04 H1080" stroke="#e2e2e2" stroke-width="1"/><path d="M719 393.38 H1080" stroke="#e2e2e2" stroke-width="1"/><path d="M719 409.72 H1080" stroke="#e2e2e2" stroke-width="1"/><path d="M719 426.06 H1080" stroke="#e2e2e2" stroke-width="1"/><path d="M719 442.40 H1080" stroke="#e2e2e2" stroke-width="1"/><path d="M719 458.74 H1080" stroke="#e2e2e2" stroke-width="1"/><path d="M719 475.08 H1080" stroke="#e2e2e2" stroke-width="1"/><path d="M746.70 192 V475" stroke="#e2e2e2" stroke-width="1"/><path d="M784.03 192 V475" stroke="#e2e2e2" stroke-width="1"/><path d="M821.36 192 V475" stroke="#e2e2e2" stroke-width="1"/><path d="M858.69 192 V475" stroke="#e2e2e2" stroke-width="1"/><path d="M896.02 192 V475" stroke="#e2e2e2" stroke-width="1"/><path d="M933.35 192 V475" stroke="#e2e2e2" stroke-width="1"/><path d="M970.68 192 V475" stroke="#e2e2e2" stroke-width="1"/><path d="M1008.01 192 V475" stroke="#e2e2e2" stroke-width="1"/><path d="M1045.34 192 V475" stroke="#e2e2e2" stroke-width="1"/><path d="M1082.67 192 V475" stroke="#e2e2e2" stroke-width="1"/><path d="M722.4 197 V475.5" stroke="#d8d8d8" stroke-width="1"/></svg>
<div style="left:899.5px;top:211px;width:60px;height:10px;line-height:10px;text-align:center;font-size:8.8px;color:#4f8fd0;transform:rotate(-90deg);white-space:pre">5689.37</div>
<div style="left:926.5px;top:211px;width:60px;height:10px;line-height:10px;text-align:center;font-size:8.8px;color:#8fb8e8;transform:rotate(-90deg);white-space:pre">5722.56</div>
<div style="left:966px;top:211px;width:60px;height:10px;line-height:10px;text-align:center;font-size:8.8px;color:#8fb8e8;transform:rotate(-90deg);white-space:pre">5788.94</div>
<div style="left:991px;top:211px;width:60px;height:10px;line-height:10px;text-align:center;font-size:8.8px;color:#4f8fd0;transform:rotate(-90deg);white-space:pre">5822.13</div>
<div style="left:676.50px;width:40.00px;text-align:right;overflow:hidden;top:191.10px;height:14px;line-height:14px;font-size:9px;color:#3a3a3a;font-weight:normal;white-space:pre;">50%</div>
<div style="left:676.50px;width:40.00px;text-align:right;overflow:hidden;top:207.44px;height:14px;line-height:14px;font-size:9px;color:#3a3a3a;font-weight:normal;white-space:pre;">46%</div>
<div style="left:676.50px;width:40.00px;text-align:right;overflow:hidden;top:223.78px;height:14px;line-height:14px;font-size:9px;color:#3a3a3a;font-weight:normal;white-space:pre;">42%</div>
<div style="left:676.50px;width:40.00px;text-align:right;overflow:hidden;top:240.12px;height:14px;line-height:14px;font-size:9px;color:#3a3a3a;font-weight:normal;white-space:pre;">38%</div>
<div style="left:676.50px;width:40.00px;text-align:right;overflow:hidden;top:256.46px;height:14px;line-height:14px;font-size:9px;color:#3a3a3a;font-weight:normal;white-space:pre;">34%</div>
<div style="left:676.50px;width:40.00px;text-align:right;overflow:hidden;top:272.80px;height:14px;line-height:14px;font-size:9px;color:#3a3a3a;font-weight:normal;white-space:pre;">31%</div>
<div style="left:676.50px;width:40.00px;text-align:right;overflow:hidden;top:289.14px;height:14px;line-height:14px;font-size:9px;color:#3a3a3a;font-weight:normal;white-space:pre;">27%</div>
<div style="left:676.50px;width:40.00px;text-align:right;overflow:hidden;top:305.48px;height:14px;line-height:14px;font-size:9px;color:#3a3a3a;font-weight:normal;white-space:pre;">23%</div>
<div style="left:676.50px;width:40.00px;text-align:right;overflow:hidden;top:321.82px;height:14px;line-height:14px;font-size:9px;color:#3a3a3a;font-weight:normal;white-space:pre;">19%</div>
<div style="left:676.50px;width:40.00px;text-align:right;overflow:hidden;top:338.16px;height:14px;line-height:14px;font-size:9px;color:#3a3a3a;font-weight:normal;white-space:pre;">15%</div>
<div style="left:676.50px;width:40.00px;text-align:right;overflow:hidden;top:354.50px;height:14px;line-height:14px;font-size:9px;color:#3a3a3a;font-weight:normal;white-space:pre;">11%</div>
<div style="left:676.50px;width:40.00px;text-align:right;overflow:hidden;top:370.84px;height:14px;line-height:14px;font-size:9px;color:#3a3a3a;font-weight:normal;white-space:pre;">8%</div>
<div style="left:676.50px;width:40.00px;text-align:right;overflow:hidden;top:387.18px;height:14px;line-height:14px;font-size:9px;color:#3a3a3a;font-weight:normal;white-space:pre;">4%</div>
<div style="left:679.50px;top:403.00px;width:39.00px;height:11.00px;background:#008a00;"></div>
<div style="left:677.00px;width:40.00px;text-align:right;overflow:hidden;top:402.72px;height:14px;line-height:14px;font-size:9px;color:#ffffff;font-weight:normal;white-space:pre;">0%</div>
<div style="left:676.50px;width:40.00px;text-align:right;overflow:hidden;top:419.86px;height:14px;line-height:14px;font-size:9px;color:#3a3a3a;font-weight:normal;white-space:pre;">-4%</div>
<div style="left:676.50px;width:40.00px;text-align:right;overflow:hidden;top:436.20px;height:14px;line-height:14px;font-size:9px;color:#3a3a3a;font-weight:normal;white-space:pre;">-8%</div>
<div style="left:676.50px;width:40.00px;text-align:right;overflow:hidden;top:452.54px;height:14px;line-height:14px;font-size:9px;color:#3a3a3a;font-weight:normal;white-space:pre;">-11%</div>
<div style="left:676.50px;width:40.00px;text-align:right;overflow:hidden;top:468.88px;height:14px;line-height:14px;font-size:9px;color:#3a3a3a;font-weight:normal;white-space:pre;">-15%</div>
<div style="left:726.70px;width:40.00px;text-align:center;overflow:hidden;top:182.80px;height:14px;line-height:14px;font-size:9px;color:#3a3a3a;font-weight:normal;white-space:pre;">-5.3%</div>
<div style="left:764.00px;width:40.00px;text-align:center;overflow:hidden;top:182.80px;height:14px;line-height:14px;font-size:9px;color:#3a3a3a;font-weight:normal;white-space:pre;">-4.4%</div>
<div style="left:801.30px;width:40.00px;text-align:center;overflow:hidden;top:182.80px;height:14px;line-height:14px;font-size:9px;color:#3a3a3a;font-weight:normal;white-space:pre;">-3.6%</div>
<div style="left:838.60px;width:40.00px;text-align:center;overflow:hidden;top:182.80px;height:14px;line-height:14px;font-size:9px;color:#3a3a3a;font-weight:normal;white-space:pre;">-2.7%</div>
<div style="left:876.00px;width:40.00px;text-align:center;overflow:hidden;top:182.80px;height:14px;line-height:14px;font-size:9px;color:#3a3a3a;font-weight:normal;white-space:pre;">-1.8%</div>
<div style="left:913.30px;width:40.00px;text-align:center;overflow:hidden;top:182.80px;height:14px;line-height:14px;font-size:9px;color:#3a3a3a;font-weight:normal;white-space:pre;">-1.0%</div>
<div style="left:950.60px;width:40.00px;text-align:center;overflow:hidden;top:182.80px;height:14px;line-height:14px;font-size:9px;color:#3a3a3a;font-weight:normal;white-space:pre;">-0.1%</div>
<div style="left:990.00px;width:40.00px;text-align:center;overflow:hidden;top:182.80px;height:14px;line-height:14px;font-size:9px;color:#3a3a3a;font-weight:normal;white-space:pre;">.8%</div>
<div style="left:1025.30px;width:40.00px;text-align:center;overflow:hidden;top:182.80px;height:14px;line-height:14px;font-size:9px;color:#3a3a3a;font-weight:normal;white-space:pre;">1.6%</div>
<div style="left:1062.60px;width:40.00px;text-align:center;overflow:hidden;top:182.80px;height:14px;line-height:14px;font-size:9px;color:#3a3a3a;font-weight:normal;white-space:pre;">2.0%</div>
<div style="left:980.00px;top:182.30px;width:24.60px;height:10.80px;background:#ffffff;border:1px solid #687080;box-sizing:border-box;"></div>
<div style="left:977.20px;width:30.00px;text-align:center;overflow:hidden;top:181.00px;height:14px;line-height:14px;font-size:9px;color:#3a3a3a;font-weight:normal;white-space:pre;">0.4%</div>
<svg style="left:0;top:0;width:1080px;height:675px" viewBox="0 0 1080 675"><defs><clipPath id="pc"><rect x="722.4" y="197" width="360" height="278.5"/></clipPath></defs><g clip-path="url(#pc)"><path d="M742.4 197 V476" stroke="#c050c8" stroke-width="1.2" stroke-dasharray="3 3"/><path d="M722.4 409.2 H1080" stroke="#404040" stroke-width="1.1"/><path d="M722.40 462.00 C732.00 459.17 761.23 450.15 780.00 445.00 C798.77 439.85 818.33 434.77 835.00 431.10 C851.67 427.43 863.68 425.78 880.00 423.00 C896.32 420.22 917.77 416.35 932.90 414.40 C948.03 412.45 959.62 412.27 970.80 411.30 C981.98 410.33 987.65 409.48 1000.00 408.60 C1012.35 407.72 1031.57 406.60 1044.90 406.00 C1058.23 405.40 1074.15 405.17 1080.00 405.00" fill="none" stroke="#98b4f0" stroke-width="1.1"/><path d="M722.40 448.00 C732.00 444.58 761.23 434.27 780.00 427.50 C798.77 420.73 818.33 412.28 835.00 407.40 C851.67 402.52 863.68 400.77 880.00 398.20 C896.32 395.63 917.77 393.30 932.90 392.00 C948.03 390.70 958.28 390.67 970.80 390.40 C983.32 390.13 995.65 390.23 1008.00 390.40 C1020.35 390.57 1032.90 390.88 1044.90 391.40 C1056.90 391.92 1074.15 393.15 1080.00 393.50" fill="none" stroke="#f07070" stroke-width="1.1"/><path d="M722.4 462.2 L742.6 409 L783.6 274 L821.3 216.5 L858.6 322  C864.38 325.45 882.18 336.88 893.30 342.70 C904.42 348.52 907.52 350.23 925.30 356.90 C943.08 363.57 980.07 376.60 1000.00 382.70 C1019.93 388.80 1031.57 390.55 1044.90 393.50 C1058.23 396.45 1074.15 399.25 1080.00 400.40" fill="none" stroke="#4a44c4" stroke-width="1.6" stroke-linejoin="round"/><path d="M968 411 L992.6 408.5" stroke="#c08a80" stroke-width="5.5" opacity="0.85"/><circle cx="992.6" cy="409" r="3.4" fill="#20e0e0" stroke="#1a4a50" stroke-width="1"/></g></svg>
<div style="left:932.00px;top:456.50px;height:14px;line-height:14px;font-size:9.2px;color:#8a40b0;font-weight:normal;white-space:pre;">88.2%</div>
<div style="left:726.30px;top:202.20px;width:138.20px;height:81.80px;background:rgba(226,234,246,0.82);border:1px solid #9aa6b6;border-radius:4px;box-sizing:border-box;"></div>
<div style="left:733.00px;top:209.20px;width:2.80px;height:9.80px;background:#f03030;"></div>
<div style="left:736.00px;top:207.00px;height:14px;line-height:14px;font-size:9px;color:#6a6a6a;font-weight:normal;white-space:pre;">-10.20 Realized PnL</div>
<div style="left:733.00px;top:220.90px;width:2.80px;height:9.80px;background:#80a8e0;"></div>
<div style="left:736.00px;top:218.70px;height:14px;line-height:14px;font-size:9px;color:#505050;font-weight:normal;white-space:pre;">+2</div>
<div style="left:749.00px;top:218.70px;height:14px;line-height:14px;font-size:9px;color:#5a5ef0;font-weight:normal;white-space:pre;">15nov. 5600 Put Δ</div>
<div style="left:818.00px;width:40.00px;text-align:right;overflow:hidden;top:218.70px;height:14px;line-height:14px;font-size:9px;color:#5a5ef0;font-weight:normal;white-space:pre;">-27.51</div>
<div style="left:733.00px;top:232.60px;width:2.80px;height:9.80px;background:#80a8e0;"></div>
<div style="left:736.00px;top:230.40px;height:14px;line-height:14px;font-size:9px;color:#505050;font-weight:normal;white-space:pre;">+2</div>
<div style="left:749.00px;top:230.40px;height:14px;line-height:14px;font-size:9px;color:#5a5ef0;font-weight:normal;white-space:pre;">15nov. 5425 Put Δ</div>
<div style="left:818.00px;width:40.00px;text-align:right;overflow:hidden;top:230.40px;height:14px;line-height:14px;font-size:9px;color:#5a5ef0;font-weight:normal;white-space:pre;">-17.06</div>
<div style="left:733.00px;top:244.30px;width:2.80px;height:9.80px;background:#80a8e0;"></div>
<div style="left:736.00px;top:242.10px;height:14px;line-height:14px;font-size:9px;color:#505050;font-weight:normal;white-space:pre;">+2</div>
<div style="left:748.00px;top:242.10px;height:14px;line-height:14px;font-size:9px;color:#5a5ef0;font-weight:normal;white-space:pre;">20dic. 5450 Put Δ</div>
<div style="left:815.00px;width:40.00px;text-align:right;overflow:hidden;top:242.10px;height:14px;line-height:14px;font-size:9px;color:#5a5ef0;font-weight:normal;white-space:pre;">-21.02</div>
<div style="left:733.00px;top:256.00px;width:2.80px;height:9.80px;background:#80a8e0;"></div>
<div style="left:736.00px;top:253.80px;height:14px;line-height:14px;font-size:9px;color:#505050;font-weight:normal;white-space:pre;">-4</div>
<div style="left:747.00px;top:253.80px;height:14px;line-height:14px;font-size:9px;color:#f05a5a;font-weight:normal;white-space:pre;">15nov. 5550 Put Δ</div>
<div style="left:815.00px;width:40.00px;text-align:right;overflow:hidden;top:253.80px;height:14px;line-height:14px;font-size:9px;color:#f05a5a;font-weight:normal;white-space:pre;">-23.98</div>
<div style="left:733.00px;top:267.70px;width:2.80px;height:9.80px;background:#80a8e0;"></div>
<div style="left:736.00px;top:265.50px;height:14px;line-height:14px;font-size:9px;color:#505050;font-weight:normal;white-space:pre;">-2</div>
<div style="left:747.00px;top:265.50px;height:14px;line-height:14px;font-size:9px;color:#f05a5a;font-weight:normal;white-space:pre;">15nov. 5500 Put Δ</div>
<div style="left:815.00px;width:40.00px;text-align:right;overflow:hidden;top:265.50px;height:14px;line-height:14px;font-size:9px;color:#f05a5a;font-weight:normal;white-space:pre;">-20.93</div>
<div style="left:726.00px;top:423.60px;width:98.00px;height:46.00px;background:rgba(226,234,246,0.82);border:1px solid #9aa6b6;border-radius:4px;box-sizing:border-box;"></div>
<div style="left:733.00px;top:428.50px;height:14px;line-height:14px;font-size:9px;color:#8a88d8;font-weight:normal;white-space:pre;">15/11/2024 (0)</div>
<div style="left:733.00px;top:440.50px;height:14px;line-height:14px;font-size:8.8px;color:#f07a7a;font-weight:normal;white-space:pre;">19/10/2024 (27) T+26</div>
<div style="left:733.00px;top:452.50px;height:14px;line-height:14px;font-size:8.8px;color:#9ab6ee;font-weight:normal;white-space:pre;">23/09/2024 (53) T+0</div>
<div style="left:720.50px;top:456.70px;height:14px;line-height:14px;font-size:8.6px;color:#7a3aa0;font-weight:normal;white-space:pre;">-11.8%</div>
<div style="left:1042.00px;top:202.60px;width:50.00px;height:36.10px;background:rgba(234,240,248,0.95);border:1px solid #9aa6b6;border-radius:4px;box-sizing:border-box;"></div>
<div style="left:1051.00px;top:205.00px;height:14px;line-height:14px;font-size:10px;color:#4a4a4a;font-weight:normal;white-space:pre;-webkit-text-stroke:0.25px #4a4a4a">Comments</div>
<div style="left:1050.00px;top:222.00px;height:14px;line-height:14px;font-size:9.6px;color:#606060;font-weight:normal;white-space:pre;">Trade Comments</div>
<div style="left:728.70px;width:36.00px;text-align:center;overflow:hidden;top:477.50px;height:14px;line-height:14px;font-size:9px;color:#2a2a2a;font-weight:normal;white-space:pre;">5450</div>
<div style="left:766.03px;width:36.00px;text-align:center;overflow:hidden;top:477.50px;height:14px;line-height:14px;font-size:9px;color:#2a2a2a;font-weight:normal;white-space:pre;">5500</div>
<div style="left:803.36px;width:36.00px;text-align:center;overflow:hidden;top:477.50px;height:14px;line-height:14px;font-size:9px;color:#2a2a2a;font-weight:normal;white-space:pre;">5550</div>
<div style="left:840.69px;width:36.00px;text-align:center;overflow:hidden;top:477.50px;height:14px;line-height:14px;font-size:9px;color:#2a2a2a;font-weight:normal;white-space:pre;">5600</div>
<div style="left:878.02px;width:36.00px;text-align:center;overflow:hidden;top:477.50px;height:14px;line-height:14px;font-size:9px;color:#2a2a2a;font-weight:normal;white-space:pre;">5650</div>
<div style="left:915.35px;width:36.00px;text-align:center;overflow:hidden;top:477.50px;height:14px;line-height:14px;font-size:9px;color:#2a2a2a;font-weight:normal;white-space:pre;">5700</div>
<div style="left:952.68px;width:36.00px;text-align:center;overflow:hidden;top:477.50px;height:14px;line-height:14px;font-size:9px;color:#2a2a2a;font-weight:normal;white-space:pre;">5750</div>
<div style="left:990.01px;width:36.00px;text-align:center;overflow:hidden;top:477.50px;height:14px;line-height:14px;font-size:9px;color:#2a2a2a;font-weight:normal;white-space:pre;">5800</div>
<div style="left:1027.34px;width:36.00px;text-align:center;overflow:hidden;top:477.50px;height:14px;line-height:14px;font-size:9px;color:#2a2a2a;font-weight:normal;white-space:pre;">5850</div>
<div style="left:1064.67px;width:36.00px;text-align:center;overflow:hidden;top:477.50px;height:14px;line-height:14px;font-size:9px;color:#2a2a2a;font-weight:normal;white-space:pre;">5900</div>
<div style="left:677.80px;top:493.00px;width:420.00px;height:158.80px;background:#e8eef7;border:1px solid #8a96a8;border-radius:4px;box-sizing:border-box;"></div>
<div style="left:680.00px;width:40.00px;text-align:center;overflow:hidden;top:510.20px;height:14px;line-height:14px;font-size:9.2px;color:#6e6e6e;font-weight:normal;white-space:pre;">PnL</div>
<div style="left:680.00px;width:40.00px;text-align:center;overflow:hidden;top:546.80px;height:14px;line-height:14px;font-size:9.2px;color:#6e6e6e;font-weight:normal;white-space:pre;">Delta</div>
<div style="left:680.00px;width:40.00px;text-align:center;overflow:hidden;top:574.00px;height:14px;line-height:14px;font-size:9.2px;color:#6e6e6e;font-weight:normal;white-space:pre;">Gamma</div>
<div style="left:680.00px;width:40.00px;text-align:center;overflow:hidden;top:601.30px;height:14px;line-height:14px;font-size:9.2px;color:#6e6e6e;font-weight:normal;white-space:pre;">Theta</div>
<div style="left:680.00px;width:40.00px;text-align:center;overflow:hidden;top:628.70px;height:14px;line-height:14px;font-size:9.2px;color:#6e6e6e;font-weight:normal;white-space:pre;">Vega</div>
<div style="left:0;top:0;width:1080px;height:651px;overflow:hidden"><svg style="left:0;top:0;width:1080px;height:675px" viewBox="0 0 1080 675"><g stroke="#5a5e66" stroke-width="1"><rect x="722.7" y="516.3" width="43.5" height="9.2" fill="#f07575"/><rect x="722.7" y="544.2" width="43.5" height="8.5" fill="#5a78f8"/><rect x="722.7" y="580.5" width="43.5" height="8.8" fill="#f07575"/><rect x="722.7" y="602.0" width="43.5" height="5.9" fill="#5a78f8"/><rect x="722.7" y="626.5" width="43.5" height="9.0" fill="#5a78f8"/><rect x="766.2" y="516.3" width="37.3" height="7.0" fill="#f07575"/><rect x="766.2" y="545.2" width="37.3" height="7.5" fill="#5a78f8"/><rect x="766.2" y="580.5" width="37.3" height="8.8" fill="#f07575"/><rect x="766.2" y="600.7" width="37.3" height="7.2" fill="#5a78f8"/><rect x="766.2" y="627.9" width="37.3" height="7.6" fill="#5a78f8"/><rect x="803.5" y="516.3" width="37.4" height="5.1" fill="#f07575"/><rect x="803.5" y="546.2" width="37.4" height="6.5" fill="#5a78f8"/><rect x="803.5" y="580.5" width="37.4" height="8.8" fill="#f07575"/><rect x="803.5" y="599.8" width="37.4" height="8.1" fill="#5a78f8"/><rect x="803.5" y="628.9" width="37.4" height="6.6" fill="#5a78f8"/><rect x="840.9" y="516.3" width="37.3" height="3.5" fill="#f07575"/><rect x="840.9" y="547.2" width="37.3" height="5.5" fill="#5a78f8"/><rect x="840.9" y="580.5" width="37.3" height="8.8" fill="#f07575"/><rect x="840.9" y="599.2" width="37.3" height="8.7" fill="#5a78f8"/><rect x="840.9" y="629.7" width="37.3" height="5.8" fill="#5a78f8"/><rect x="878.2" y="516.3" width="37.3" height="2.3" fill="#f07575"/><rect x="878.2" y="548.2" width="37.3" height="4.5" fill="#5a78f8"/><rect x="878.2" y="580.5" width="37.3" height="8.8" fill="#f07575"/><rect x="878.2" y="599.0" width="37.3" height="8.9" fill="#5a78f8"/><rect x="878.2" y="630.2" width="37.3" height="5.3" fill="#5a78f8"/><rect x="915.5" y="516.3" width="37.4" height="1.3" fill="#f07575"/><rect x="915.5" y="549.2" width="37.4" height="3.5" fill="#5a78f8"/><rect x="915.5" y="580.5" width="37.4" height="8.8" fill="#f07575"/><rect x="915.5" y="599.2" width="37.4" height="8.7" fill="#5a78f8"/><rect x="915.5" y="630.5" width="37.4" height="5.0" fill="#5a78f8"/><rect x="952.9" y="516.3" width="37.3" height="0.6" fill="#f07575"/><rect x="952.9" y="550.1" width="37.3" height="2.6" fill="#5a78f8"/><rect x="952.9" y="580.5" width="37.3" height="8.8" fill="#f07575"/><rect x="952.9" y="599.6" width="37.3" height="8.3" fill="#5a78f8"/><rect x="952.9" y="630.5" width="37.3" height="5.0" fill="#5a78f8"/><rect x="990.2" y="516.0" width="37.3" height="0.3" fill="#5a78f8"/><rect x="990.2" y="550.9" width="37.3" height="1.8" fill="#5a78f8"/><rect x="990.2" y="580.5" width="37.3" height="5.0" fill="#f07575"/><rect x="990.2" y="600.3" width="37.3" height="7.6" fill="#5a78f8"/><rect x="990.2" y="630.4" width="37.3" height="5.1" fill="#5a78f8"/><rect x="1027.5" y="515.7" width="37.3" height="0.6" fill="#5a78f8"/><rect x="1027.5" y="551.5" width="37.3" height="1.2" fill="#5a78f8"/><rect x="1027.5" y="580.5" width="37.3" height="5.0" fill="#f07575"/><rect x="1027.5" y="601.1" width="37.3" height="6.8" fill="#5a78f8"/><rect x="1027.5" y="630.2" width="37.3" height="5.3" fill="#5a78f8"/><rect x="1064.8" y="515.4" width="37.2" height="0.9" fill="#5a78f8"/><rect x="1064.8" y="552.2" width="37.2" height="0.5" fill="#5a78f8"/><rect x="1064.8" y="580.5" width="37.2" height="5.0" fill="#f07575"/><rect x="1064.8" y="602.0" width="37.2" height="5.9" fill="#5a78f8"/><rect x="1064.8" y="630.1" width="37.2" height="5.4" fill="#5a78f8"/></g></svg></div>
<div style="left:728.70px;width:36.00px;text-align:center;overflow:hidden;top:496.00px;height:14px;line-height:14px;font-size:8.7px;color:#f06a6a;font-weight:normal;white-space:pre;">-10%</div>
<div style="left:728.70px;width:36.00px;text-align:center;overflow:hidden;top:505.80px;height:14px;line-height:14px;font-size:8.7px;color:#f06a6a;font-weight:normal;white-space:pre;">-2729</div>
<div style="left:728.70px;width:36.00px;text-align:center;overflow:hidden;top:551.30px;height:14px;line-height:14px;font-size:8.7px;color:#6a78f2;font-weight:normal;white-space:pre;">13.51</div>
<div style="left:728.70px;width:36.00px;text-align:center;overflow:hidden;top:569.70px;height:14px;line-height:14px;font-size:8.7px;color:#f06a6a;font-weight:normal;white-space:pre;">-0.03</div>
<div style="left:728.70px;width:36.00px;text-align:center;overflow:hidden;top:607.00px;height:14px;line-height:14px;font-size:8.7px;color:#6a78f2;font-weight:normal;white-space:pre;">25.33</div>
<div style="left:728.70px;width:36.00px;text-align:center;overflow:hidden;top:634.30px;height:14px;line-height:14px;font-size:8.7px;color:#6a78f2;font-weight:normal;white-space:pre;">192.64</div>
<div style="left:766.03px;width:36.00px;text-align:center;overflow:hidden;top:496.00px;height:14px;line-height:14px;font-size:8.7px;color:#f06a6a;font-weight:normal;white-space:pre;">-8%</div>
<div style="left:766.03px;width:36.00px;text-align:center;overflow:hidden;top:505.80px;height:14px;line-height:14px;font-size:8.7px;color:#f06a6a;font-weight:normal;white-space:pre;">-2092</div>
<div style="left:766.03px;width:36.00px;text-align:center;overflow:hidden;top:551.30px;height:14px;line-height:14px;font-size:8.7px;color:#6a78f2;font-weight:normal;white-space:pre;">11.95</div>
<div style="left:766.03px;width:36.00px;text-align:center;overflow:hidden;top:569.70px;height:14px;line-height:14px;font-size:8.7px;color:#f06a6a;font-weight:normal;white-space:pre;">-0.03</div>
<div style="left:766.03px;width:36.00px;text-align:center;overflow:hidden;top:607.00px;height:14px;line-height:14px;font-size:8.7px;color:#6a78f2;font-weight:normal;white-space:pre;">31.09</div>
<div style="left:766.03px;width:36.00px;text-align:center;overflow:hidden;top:634.30px;height:14px;line-height:14px;font-size:8.7px;color:#6a78f2;font-weight:normal;white-space:pre;">163.60</div>
<div style="left:803.36px;width:36.00px;text-align:center;overflow:hidden;top:496.00px;height:14px;line-height:14px;font-size:8.7px;color:#f06a6a;font-weight:normal;white-space:pre;">-6%</div>
<div style="left:803.36px;width:36.00px;text-align:center;overflow:hidden;top:505.80px;height:14px;line-height:14px;font-size:8.7px;color:#f06a6a;font-weight:normal;white-space:pre;">-1534</div>
<div style="left:803.36px;width:36.00px;text-align:center;overflow:hidden;top:551.30px;height:14px;line-height:14px;font-size:8.7px;color:#6a78f2;font-weight:normal;white-space:pre;">10.32</div>
<div style="left:803.36px;width:36.00px;text-align:center;overflow:hidden;top:569.70px;height:14px;line-height:14px;font-size:8.7px;color:#f06a6a;font-weight:normal;white-space:pre;">-0.03</div>
<div style="left:803.36px;width:36.00px;text-align:center;overflow:hidden;top:607.00px;height:14px;line-height:14px;font-size:8.7px;color:#6a78f2;font-weight:normal;white-space:pre;">35.21</div>
<div style="left:803.36px;width:36.00px;text-align:center;overflow:hidden;top:634.30px;height:14px;line-height:14px;font-size:8.7px;color:#6a78f2;font-weight:normal;white-space:pre;">140.52</div>
<div style="left:840.69px;width:36.00px;text-align:center;overflow:hidden;top:496.00px;height:14px;line-height:14px;font-size:8.7px;color:#f06a6a;font-weight:normal;white-space:pre;">-4%</div>
<div style="left:840.69px;width:36.00px;text-align:center;overflow:hidden;top:505.80px;height:14px;line-height:14px;font-size:8.7px;color:#f06a6a;font-weight:normal;white-space:pre;">-1060</div>
<div style="left:840.69px;width:36.00px;text-align:center;overflow:hidden;top:551.30px;height:14px;line-height:14px;font-size:8.7px;color:#6a78f2;font-weight:normal;white-space:pre;">8.67</div>
<div style="left:840.69px;width:36.00px;text-align:center;overflow:hidden;top:569.70px;height:14px;line-height:14px;font-size:8.7px;color:#f06a6a;font-weight:normal;white-space:pre;">-0.03</div>
<div style="left:840.69px;width:36.00px;text-align:center;overflow:hidden;top:607.00px;height:14px;line-height:14px;font-size:8.7px;color:#6a78f2;font-weight:normal;white-space:pre;">37.65</div>
<div style="left:840.69px;width:36.00px;text-align:center;overflow:hidden;top:634.30px;height:14px;line-height:14px;font-size:8.7px;color:#6a78f2;font-weight:normal;white-space:pre;">123.67</div>
<div style="left:878.02px;width:36.00px;text-align:center;overflow:hidden;top:496.00px;height:14px;line-height:14px;font-size:8.7px;color:#f06a6a;font-weight:normal;white-space:pre;">-3%</div>
<div style="left:878.02px;width:36.00px;text-align:center;overflow:hidden;top:505.80px;height:14px;line-height:14px;font-size:8.7px;color:#f06a6a;font-weight:normal;white-space:pre;">-667</div>
<div style="left:878.02px;width:36.00px;text-align:center;overflow:hidden;top:551.30px;height:14px;line-height:14px;font-size:8.7px;color:#6a78f2;font-weight:normal;white-space:pre;">7.07</div>
<div style="left:878.02px;width:36.00px;text-align:center;overflow:hidden;top:569.70px;height:14px;line-height:14px;font-size:8.7px;color:#f06a6a;font-weight:normal;white-space:pre;">-0.03</div>
<div style="left:878.02px;width:36.00px;text-align:center;overflow:hidden;top:607.00px;height:14px;line-height:14px;font-size:8.7px;color:#6a78f2;font-weight:normal;white-space:pre;">38.46</div>
<div style="left:878.02px;width:36.00px;text-align:center;overflow:hidden;top:634.30px;height:14px;line-height:14px;font-size:8.7px;color:#6a78f2;font-weight:normal;white-space:pre;">112.82</div>
<div style="left:915.35px;width:36.00px;text-align:center;overflow:hidden;top:496.00px;height:14px;line-height:14px;font-size:8.7px;color:#f06a6a;font-weight:normal;white-space:pre;">-1%</div>
<div style="left:915.35px;width:36.00px;text-align:center;overflow:hidden;top:505.80px;height:14px;line-height:14px;font-size:8.7px;color:#f06a6a;font-weight:normal;white-space:pre;">-352</div>
<div style="left:915.35px;width:36.00px;text-align:center;overflow:hidden;top:551.30px;height:14px;line-height:14px;font-size:8.7px;color:#6a78f2;font-weight:normal;white-space:pre;">5.55</div>
<div style="left:915.35px;width:36.00px;text-align:center;overflow:hidden;top:569.70px;height:14px;line-height:14px;font-size:8.7px;color:#f06a6a;font-weight:normal;white-space:pre;">-0.03</div>
<div style="left:915.35px;width:36.00px;text-align:center;overflow:hidden;top:607.00px;height:14px;line-height:14px;font-size:8.7px;color:#6a78f2;font-weight:normal;white-space:pre;">37.79</div>
<div style="left:915.35px;width:36.00px;text-align:center;overflow:hidden;top:634.30px;height:14px;line-height:14px;font-size:8.7px;color:#6a78f2;font-weight:normal;white-space:pre;">107.31</div>
<div style="left:952.68px;width:36.00px;text-align:center;overflow:hidden;top:496.00px;height:14px;line-height:14px;font-size:8.7px;color:#f06a6a;font-weight:normal;white-space:pre;">0%</div>
<div style="left:952.68px;width:36.00px;text-align:center;overflow:hidden;top:505.80px;height:14px;line-height:14px;font-size:8.7px;color:#f06a6a;font-weight:normal;white-space:pre;">-109</div>
<div style="left:952.68px;width:36.00px;text-align:center;overflow:hidden;top:551.30px;height:14px;line-height:14px;font-size:8.7px;color:#6a78f2;font-weight:normal;white-space:pre;">4.17</div>
<div style="left:952.68px;width:36.00px;text-align:center;overflow:hidden;top:569.70px;height:14px;line-height:14px;font-size:8.7px;color:#f06a6a;font-weight:normal;white-space:pre;">-0.03</div>
<div style="left:952.68px;width:36.00px;text-align:center;overflow:hidden;top:607.00px;height:14px;line-height:14px;font-size:8.7px;color:#6a78f2;font-weight:normal;white-space:pre;">35.87</div>
<div style="left:952.68px;width:36.00px;text-align:center;overflow:hidden;top:634.30px;height:14px;line-height:14px;font-size:8.7px;color:#6a78f2;font-weight:normal;white-space:pre;">106.21</div>
<div style="left:990.01px;width:36.00px;text-align:center;overflow:hidden;top:514.90px;height:14px;line-height:14px;font-size:8.7px;color:#6a78f2;font-weight:normal;white-space:pre;">67</div>
<div style="left:990.01px;width:36.00px;text-align:center;overflow:hidden;top:523.70px;height:14px;line-height:14px;font-size:8.7px;color:#6a78f2;font-weight:normal;white-space:pre;">0%</div>
<div style="left:990.01px;width:36.00px;text-align:center;overflow:hidden;top:551.30px;height:14px;line-height:14px;font-size:8.7px;color:#6a78f2;font-weight:normal;white-space:pre;">2.93</div>
<div style="left:990.01px;width:36.00px;text-align:center;overflow:hidden;top:569.70px;height:14px;line-height:14px;font-size:8.7px;color:#f06a6a;font-weight:normal;white-space:pre;">-0.02</div>
<div style="left:990.01px;width:36.00px;text-align:center;overflow:hidden;top:607.00px;height:14px;line-height:14px;font-size:8.7px;color:#6a78f2;font-weight:normal;white-space:pre;">32.95</div>
<div style="left:990.01px;width:36.00px;text-align:center;overflow:hidden;top:634.30px;height:14px;line-height:14px;font-size:8.7px;color:#6a78f2;font-weight:normal;white-space:pre;">108.40</div>
<div style="left:1027.34px;width:36.00px;text-align:center;overflow:hidden;top:514.90px;height:14px;line-height:14px;font-size:8.7px;color:#6a78f2;font-weight:normal;white-space:pre;">186</div>
<div style="left:1027.34px;width:36.00px;text-align:center;overflow:hidden;top:523.70px;height:14px;line-height:14px;font-size:8.7px;color:#6a78f2;font-weight:normal;white-space:pre;">1%</div>
<div style="left:1027.34px;width:36.00px;text-align:center;overflow:hidden;top:551.30px;height:14px;line-height:14px;font-size:8.7px;color:#6a78f2;font-weight:normal;white-space:pre;">1.85</div>
<div style="left:1027.34px;width:36.00px;text-align:center;overflow:hidden;top:569.70px;height:14px;line-height:14px;font-size:8.7px;color:#f06a6a;font-weight:normal;white-space:pre;">-0.02</div>
<div style="left:1027.34px;width:36.00px;text-align:center;overflow:hidden;top:607.00px;height:14px;line-height:14px;font-size:8.7px;color:#6a78f2;font-weight:normal;white-space:pre;">29.32</div>
<div style="left:1027.34px;width:36.00px;text-align:center;overflow:hidden;top:634.30px;height:14px;line-height:14px;font-size:8.7px;color:#6a78f2;font-weight:normal;white-space:pre;">112.73</div>
<div style="left:1064.67px;width:36.00px;text-align:center;overflow:hidden;top:514.90px;height:14px;line-height:14px;font-size:8.7px;color:#6a78f2;font-weight:normal;white-space:pre;">2..</div>
<div style="left:1064.67px;width:36.00px;text-align:center;overflow:hidden;top:523.70px;height:14px;line-height:14px;font-size:8.7px;color:#6a78f2;font-weight:normal;white-space:pre;">1%</div>
<div style="left:1064.67px;width:36.00px;text-align:center;overflow:hidden;top:551.30px;height:14px;line-height:14px;font-size:8.7px;color:#6a78f2;font-weight:normal;white-space:pre;">0.8..</div>
<div style="left:1064.67px;width:36.00px;text-align:center;overflow:hidden;top:569.70px;height:14px;line-height:14px;font-size:8.7px;color:#f06a6a;font-weight:normal;white-space:pre;">-0.0..</div>
<div style="left:1064.67px;width:36.00px;text-align:center;overflow:hidden;top:607.00px;height:14px;line-height:14px;font-size:8.7px;color:#6a78f2;font-weight:normal;white-space:pre;">25..</div>
<div style="left:1064.67px;width:36.00px;text-align:center;overflow:hidden;top:634.30px;height:14px;line-height:14px;font-size:8.7px;color:#6a78f2;font-weight:normal;white-space:pre;">11..</div>
<div style="left:970.60px;top:478.70px;width:42.70px;height:171.20px;background:rgba(225,232,244,0.88);border:1px solid #8a96a8;border-radius:4px;box-sizing:border-box;"></div>
<div style="left:971.40px;width:42.00px;text-align:center;overflow:hidden;top:477.50px;height:14px;line-height:14px;font-size:9.2px;color:#2a2a2a;font-weight:normal;white-space:pre;">5779.50</div>
<div style="left:971.40px;width:42.00px;text-align:center;overflow:hidden;top:505.50px;height:14px;line-height:14px;font-size:9.6px;color:#2a36d8;font-weight:normal;white-space:pre;">2</div>
<div style="left:971.40px;width:42.00px;text-align:center;overflow:hidden;top:518.90px;height:14px;line-height:14px;font-size:9.6px;color:#2a36d8;font-weight:normal;white-space:pre;">0.0%</div>
<div style="left:971.40px;width:42.00px;text-align:center;overflow:hidden;top:546.30px;height:14px;line-height:14px;font-size:9.6px;color:#2a36d8;font-weight:normal;white-space:pre;">3.42</div>
<div style="left:971.40px;width:42.00px;text-align:center;overflow:hidden;top:573.80px;height:14px;line-height:14px;font-size:9.6px;color:#e83030;font-weight:normal;white-space:pre;">-0.02</div>
<div style="left:971.40px;width:42.00px;text-align:center;overflow:hidden;top:601.00px;height:14px;line-height:14px;font-size:9.6px;color:#2a36d8;font-weight:normal;white-space:pre;">34.25</div>
<div style="left:971.40px;width:42.00px;text-align:center;overflow:hidden;top:628.50px;height:14px;line-height:14px;font-size:9.6px;color:#2a36d8;font-weight:normal;white-space:pre;">107.18</div>
<div style="left:674.00px;top:654.30px;width:406.00px;height:21.00px;background:#27344f;"></div>
<div style="left:1043.00px;top:659.00px;height:14px;line-height:14px;font-size:10px;color:#f0f2f6;font-weight:normal;white-space:pre;">300%</div>
<div style="left:1077.50px;top:659.00px;height:14px;line-height:14px;font-size:10px;color:#f0f2f6;font-weight:normal;white-space:pre;">-</div>
</body></html>
